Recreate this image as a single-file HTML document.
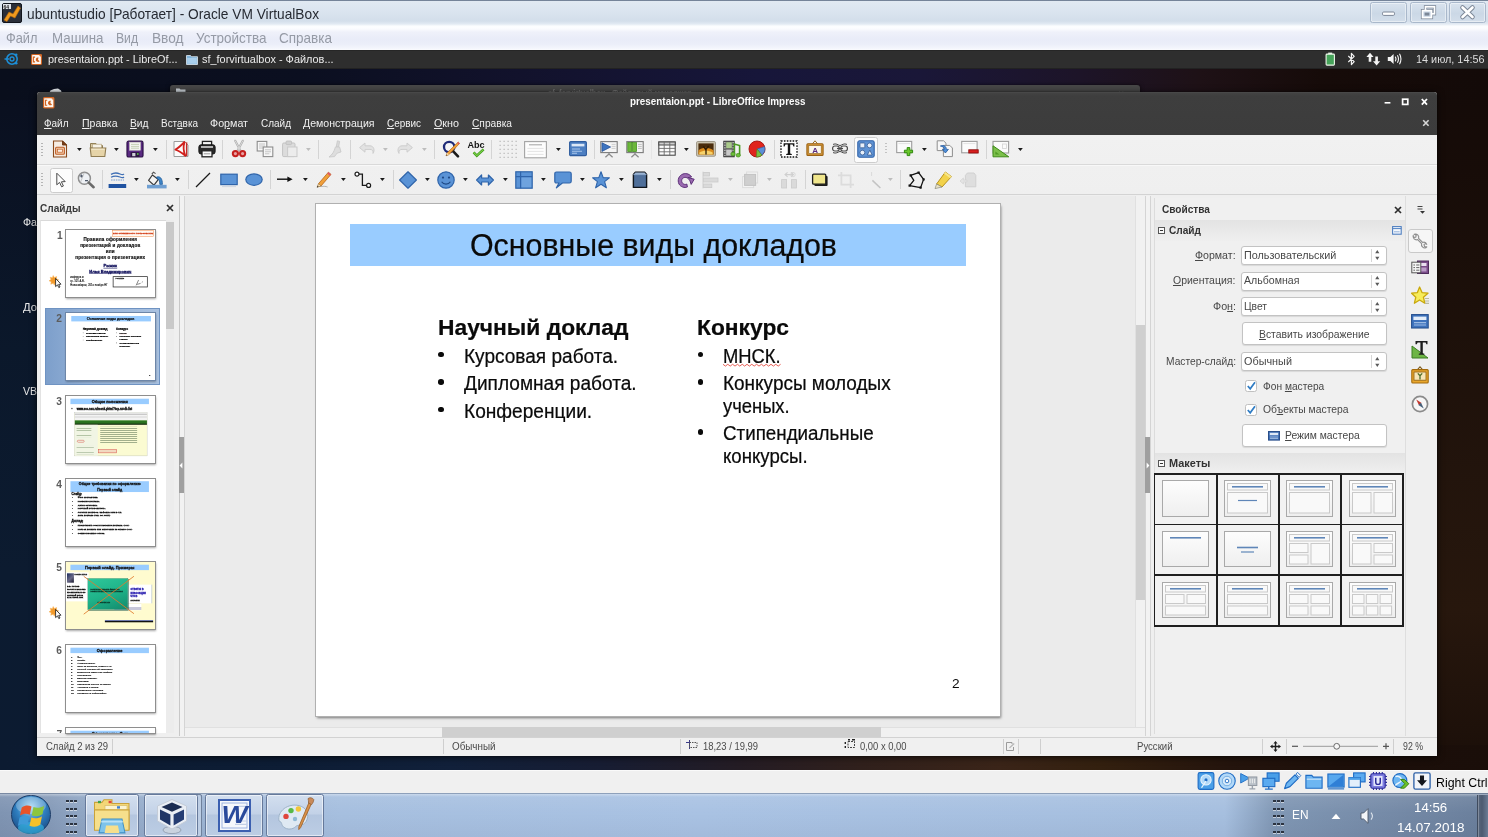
<!DOCTYPE html>
<html lang="ru"><head><meta charset="utf-8"><title>ubuntustudio - Oracle VM VirtualBox</title>
<style>
html,body{margin:0;padding:0}
body{width:1488px;height:837px;overflow:hidden;position:relative;background:#0d1626;font-family:"Liberation Sans",sans-serif}
.t{position:absolute;white-space:pre;transform-origin:0 50%;display:block}
.t u{text-decoration:underline;text-underline-offset:1px}
svg{overflow:visible;display:block}
div{box-sizing:border-box}
.root{position:absolute;left:0;top:0;width:1488px;height:837px;will-change:transform}
.th,.th *{-webkit-text-stroke:1.1px}
.sl{-webkit-text-stroke:.22px}
.th2 .t{-webkit-text-stroke:1.9px}
</style></head>
<body>
<div class="root">
<div style="position:absolute;left:0px;top:0px;width:1488px;height:27px;background:linear-gradient(#6d7c92 0,#7d8ba0 1px,#e1e9f2 1.5px,#dae4ef 12px,#d3deea 21px,#e2eaf3 24px,#fafcfe 26px,#fdfeff 27px);"></div>
<svg style="position:absolute;left:2px;top:3px;" width="20" height="20" viewBox="0 0 20 20"><rect x="0.5" y="0.5" width="19" height="19" rx="1.5" fill="#2a2f3a" stroke="#11151c"/><path d="M2 17 L7 9 L11 11 L16 3 L18.5 5 L13 15 L8.5 13 L5 18.5Z" fill="#f09a1f" stroke="#b86a08" stroke-width=".6"/><rect x="1" y="1" width="8" height="5" fill="#dfe3ea"/><text x="1.5" y="5.5" font-size="5" font-family="Liberation Sans,sans-serif" font-weight="700" fill="#222">64</text></svg>
<span class="t" style="left:26.50px;top:5.82px;font-size:15px;line-height:16.75px;color:#262a32;transform:scaleX(0.9152);">ubuntustudio [Работает] - Oracle VM VirtualBox</span>
<div style="position:absolute;left:1370px;top:2px;width:37px;height:20.5px;box-sizing:border-box;border:1px solid #a9b8cb;border-radius:2.5px;background:linear-gradient(#d9e3ee,#cbd8e6 55%,#d3deea);box-shadow:inset 0 0 0 1px rgba(255,255,255,.45);"></div>
<div style="position:absolute;left:1409.5px;top:2px;width:37px;height:20.5px;box-sizing:border-box;border:1px solid #a9b8cb;border-radius:2.5px;background:linear-gradient(#d9e3ee,#cbd8e6 55%,#d3deea);box-shadow:inset 0 0 0 1px rgba(255,255,255,.45);"></div>
<div style="position:absolute;left:1449px;top:2px;width:37px;height:20.5px;box-sizing:border-box;border:1px solid #a9b8cb;border-radius:2.5px;background:linear-gradient(#d9e3ee,#cbd8e6 55%,#d3deea);box-shadow:inset 0 0 0 1px rgba(255,255,255,.45);"></div>
<svg style="position:absolute;left:1370px;top:2px;" width="37" height="21" viewBox="0 0 37 21"><rect x="12.5" y="10" width="12" height="3.4" rx="1.2" fill="#fff" stroke="#7c8797" stroke-width="1"/></svg>
<svg style="position:absolute;left:1409.5px;top:2px;" width="37" height="21" viewBox="0 0 37 21"><g fill="none" stroke="#7c8797" stroke-width="3.2"><rect x="15.5" y="4.8" width="9" height="7"/><rect x="12.5" y="8.6" width="9" height="7" /></g><g fill="none" stroke="#fff" stroke-width="1.7"><rect x="15.5" y="4.8" width="9" height="7"/></g><rect x="12.5" y="8.6" width="9" height="7" fill="#ccd8e6" stroke="#fff" stroke-width="1.7"/><rect x="14.6" y="10.6" width="4.8" height="3" fill="#7c8797"/></svg>
<svg style="position:absolute;left:1449px;top:2px;" width="37" height="21" viewBox="0 0 37 21"><g stroke-linecap="round"><path d="M13.5 5.5 L23.5 15 M23.5 5.5 L13.5 15" stroke="#7c8797" stroke-width="4.6"/><path d="M13.5 5.5 L23.5 15 M23.5 5.5 L13.5 15" stroke="#fff" stroke-width="2.6"/></g></svg>
<div style="position:absolute;left:0px;top:27px;width:1488px;height:22.5px;background:linear-gradient(#fdfeff 0,#fafbfe 2px,#eff1fa 5px,#e9ecf8 12px,#ebeef9 17px,#f3f5fc 21px,#f8f9fd 22.5px);"></div>
<span class="t" style="left:6.00px;top:29.88px;font-size:14.5px;line-height:16.20px;color:#959aa5;transform:scaleX(0.8836);">Файл</span>
<span class="t" style="left:51.50px;top:29.88px;font-size:14.5px;line-height:16.20px;color:#959aa5;transform:scaleX(0.9178);">Машина</span>
<span class="t" style="left:116.00px;top:29.88px;font-size:14.5px;line-height:16.20px;color:#959aa5;transform:scaleX(0.8387);">Вид</span>
<span class="t" style="left:151.50px;top:29.88px;font-size:14.5px;line-height:16.20px;color:#959aa5;transform:scaleX(0.9426);">Ввод</span>
<span class="t" style="left:195.50px;top:29.88px;font-size:14.5px;line-height:16.20px;color:#959aa5;transform:scaleX(0.9294);">Устройства</span>
<span class="t" style="left:278.50px;top:29.88px;font-size:14.5px;line-height:16.20px;color:#959aa5;transform:scaleX(0.9318);">Справка</span>
<div style="position:absolute;left:0px;top:769.5px;width:1488px;height:24px;background:#f0f0f0;border-top:1px solid #fafafa;box-sizing:border-box;"></div>
<span class="t" style="left:1435.50px;top:775.18px;font-size:13.5px;line-height:15.08px;color:#000;transform:scaleX(0.9154);">Right Ctrl</span>
<div style="position:absolute;left:0px;top:793px;width:1488px;height:44px;background:linear-gradient(90deg,#7f94b2 0,#859ab8 50px,#8fa5c3 80px,#9db4d3 200px,#a6bfdf 340px,#a9c2e3 700px,#a6bfdf 1225px,#8097b4 1275px,#7489a6 1400px,#6b809d 1476px);"></div>
<div style="position:absolute;left:0px;top:793px;width:1488px;height:44px;background:linear-gradient(rgba(70,85,110,.55) 0,rgba(255,255,255,.35) 1.5px,rgba(255,255,255,.08) 4px,rgba(255,255,255,0) 20px,rgba(0,0,30,.04) 44px);"></div>
<div style="position:absolute;left:0px;top:49.5px;width:1488px;height:720px;background:linear-gradient(90deg,#0b1a2f 0,#0c192e 250px,#11122b 520px,#18132e 760px,#22141f 900px,#2e1b15 1020px,#26150e 1150px,#1c0f0a 1300px,#1b0e09 1488px);"></div>
<div style="position:absolute;left:0px;top:49.5px;width:40px;height:720px;background:linear-gradient(#090e1c 0,#0a1020 60px,#0b182b 300px,#0c1b30 520px,#0c1b31 720px);"></div>
<div style="position:absolute;left:1430px;top:49.5px;width:58px;height:720px;background:linear-gradient(#130a08 0,#170c08 120px,#22140c 420px,#27170d 560px,#1e110a 680px,#1a0e09 720px);"></div>
<div style="position:absolute;left:0px;top:49.5px;width:1488px;height:50px;background:linear-gradient(90deg,#090e1c 0,#0b0f20 300px,#12122c 520px,#17163a 760px,#1a1738 920px,#1d1428 1080px,#1e1116 1200px,#160b09 1320px,#130a08 1488px);"></div>
<div style="position:absolute;left:0px;top:745px;width:1488px;height:24.5px;background:linear-gradient(90deg,#0c1b31 0,#0d1d35 300px,#11203a 450px,#171d33 600px,#241c24 740px,#30201c 860px,#3a2418 1000px,#33200f 1100px,#24140d 1230px,#1c0f0a 1340px,#1a0e09 1488px);"></div>
<span class="t" style="left:23.00px;top:216.95px;font-size:10px;line-height:11.17px;color:#e8e8e8;transform:scaleX(1.0635);">Фа</span>
<span class="t" style="left:23.00px;top:301.95px;font-size:10px;line-height:11.17px;color:#e8e8e8;transform:scaleX(1.1248);">До</span>
<span class="t" style="left:23.00px;top:385.95px;font-size:10px;line-height:11.17px;color:#e8e8e8;transform:scaleX(1.0494);">VB</span>
<svg style="position:absolute;left:48px;top:87.5px;" width="15" height="6" viewBox="0 0 15 6"><path d="M1 5.5 L2.4 2.6 L6 1 L10 0.6 L13 2.4 L14 5.5Z" fill="#e9edf2"/></svg>
<div style="position:absolute;left:0px;top:49.5px;width:1488px;height:19.2px;background:#2e2e2e;border-top:1px solid #262626;border-bottom:1px solid #222;"></div>
<svg style="position:absolute;left:4px;top:52px;" width="14" height="14" viewBox="0 0 14 14"><circle cx="8" cy="7" r="5.2" fill="none" stroke="#1d8fd8" stroke-width="1.6"/><circle cx="8" cy="7" r="2" fill="none" stroke="#1d8fd8" stroke-width="1.3"/><path d="M0.5 7 H5" stroke="#1d8fd8" stroke-width="1.5"/><circle cx="12.2" cy="2.8" r="1.3" fill="#1d8fd8"/><circle cx="12.2" cy="11.2" r="1.3" fill="#1d8fd8"/></svg>
<svg style="position:absolute;left:30.5px;top:53.5px;" width="11" height="11" viewBox="0 0 12 12"><rect x="0.6" y="0.6" width="10.8" height="10.8" rx="1" fill="#fdf6ef" stroke="#d0621f" stroke-width="1.2"/><path d="M8.8 1.2 H10.8 V3.4Z" fill="#d0621f"/><path d="M4.4 3.4 H2.6 V8.6 H4.4" fill="none" stroke="#d0621f" stroke-width="1.2"/><path d="M8.2 3.9a2.4 2.4 0 1 0 1.2 3.9L7.6 6.2Z" fill="#d0621f"/></svg>
<span class="t" style="left:47.50px;top:54.00px;font-size:10.5px;line-height:11.73px;color:#ececec;transform:scaleX(1.0368);">presentaion.ppt - LibreOf...</span>
<svg style="position:absolute;left:185.5px;top:53.5px;" width="12" height="11" viewBox="0 0 12 11"><path d="M0.5 1.5h4l1 1.2h6v7.8h-11z" fill="#7fb2d9" stroke="#dfeaf3" stroke-width=".8"/><rect x="1.2" y="4" width="9.6" height="5.8" fill="#a9cfec"/></svg>
<span class="t" style="left:202.00px;top:54.00px;font-size:10.5px;line-height:11.73px;color:#ececec;transform:scaleX(1.0384);">sf_forvirtualbox - Файлов...</span>
<svg style="position:absolute;left:1325px;top:52px;" width="11" height="14" viewBox="0 0 11 14"><rect x="3.2" y="0.6" width="4" height="2" fill="#e9f3e6"/><rect x="1.1" y="2.1" width="8.3" height="11" rx=".8" fill="#46a35a" stroke="#eef7ea" stroke-width="1.1"/></svg>
<svg style="position:absolute;left:1346px;top:52px;" width="11" height="14" viewBox="0 0 11 14"><path d="M2.3 4 L8.2 9.6 L5.4 12.6 V1.4 L8.2 4.4 L2.3 10" fill="none" stroke="#f2f2f2" stroke-width="1.2" stroke-linejoin="round"/></svg>
<svg style="position:absolute;left:1366px;top:52px;" width="15" height="14" viewBox="0 0 15 14"><path d="M4 0.8 L7.6 5 H5.3 V9.8 H2.7 V5 H0.4Z" fill="#f4f4f4"/><path d="M10.6 13.4 L14.2 9.2 H11.9 V4.4 H9.3 V9.2 H7Z" fill="#f4f4f4"/></svg>
<svg style="position:absolute;left:1387px;top:52px;" width="16" height="14" viewBox="0 0 16 14"><path d="M0.8 5 H3.4 L6.6 2 V12 L3.4 9 H0.8Z" fill="#f4f4f4"/><path d="M8.3 4.6 Q9.8 7 8.3 9.4 M10.4 3.2 Q12.6 7 10.4 10.8 M12.5 1.8 Q15.4 7 12.5 12.2" fill="none" stroke="#f4f4f4" stroke-width="1.1"/></svg>
<span class="t" style="left:1416.00px;top:53.65px;font-size:10px;line-height:11.17px;color:#dedede;transform:scaleX(1.0841);">14 июл, 14:56</span>
<div style="position:absolute;left:170px;top:85px;width:970px;height:20px;background:#474747;border-radius:3px 3px 0 0;box-shadow:0 0 4px rgba(0,0,0,.6);"></div>
<svg style="position:absolute;left:176px;top:87px;" width="10" height="8" viewBox="0 0 10 8"><path d="M0 1.5h3.5l1 1h5v5.5h-9.5z" fill="#cfd6dc"/></svg>
<span class="t" style="left:548.00px;top:88.00px;font-size:9.5px;line-height:10.61px;color:#6f6f6f;font-weight:700;transform:scaleX(0.7970);">sf_forvirtualbox - Файловый менеджер</span>
<span class="t" style="left:1108.00px;top:88.90px;font-size:9.5px;line-height:10.61px;color:#7a7a7a;font-weight:700;">–  ×</span>
<div style="position:absolute;left:36.5px;top:92px;width:1400px;height:664px;background:#efefef;border-radius:3px 3px 0 0;box-shadow:0 1px 7px rgba(0,0,0,.75),0 0 1px #000;"></div>
<div style="position:absolute;left:36.5px;top:92px;width:1400px;height:42.5px;background:linear-gradient(#434343 0,#3e3e3e 3px,#3c3c3c 100%);border-radius:3px 3px 0 0;border-top:1px solid #484848;"></div>
<svg style="position:absolute;left:42.5px;top:96.5px;" width="11.5" height="11.5" viewBox="0 0 12 12"><rect x="0.6" y="0.6" width="10.8" height="10.8" rx="1" fill="#fdf6ef" stroke="#d0621f" stroke-width="1.2"/><path d="M8.8 1.2 H10.8 V3.4Z" fill="#d0621f"/><path d="M4.4 3.4 H2.6 V8.6 H4.4" fill="none" stroke="#d0621f" stroke-width="1.2"/><path d="M8.2 3.9a2.4 2.4 0 1 0 1.2 3.9L7.6 6.2Z" fill="#d0621f"/></svg>
<span class="t" style="left:630.00px;top:96.38px;font-size:10.3px;line-height:11.51px;color:#fafafa;font-weight:700;transform:scaleX(0.9582);">presentaion.ppt - LibreOffice Impress</span>
<svg style="position:absolute;left:1380px;top:96px;" width="54" height="12" viewBox="0 0 54 12"><path d="M4.6 6.8 H10.4" stroke="#fff" stroke-width="1.6"/><rect x="22.6" y="3.2" width="5.2" height="5.2" fill="none" stroke="#fff" stroke-width="1.7"/><path d="M41.8 3 L47 8.6 M47 3 L41.8 8.6" stroke="#fff" stroke-width="1.8"/></svg>
<svg style="position:absolute;left:1422px;top:119px;" width="8" height="8" viewBox="0 0 8 8"><path d="M1.2 1.2 L6.6 6.8 M6.6 1.2 L1.2 6.8" stroke="#d8d8d8" stroke-width="1.6"/></svg>
<span class="t" style="left:43.50px;top:117.50px;font-size:10.5px;line-height:11.73px;color:#f0f0f0;transform:scaleX(0.9491);"><u>Ф</u>айл</span>
<span class="t" style="left:81.50px;top:117.50px;font-size:10.5px;line-height:11.73px;color:#f0f0f0;transform:scaleX(1.0009);"><u>П</u>равка</span>
<span class="t" style="left:129.50px;top:117.50px;font-size:10.5px;line-height:11.73px;color:#f0f0f0;transform:scaleX(0.9739);"><u>В</u>ид</span>
<span class="t" style="left:160.50px;top:117.50px;font-size:10.5px;line-height:11.73px;color:#f0f0f0;transform:scaleX(0.9481);">Вст<u>а</u>вка</span>
<span class="t" style="left:210.00px;top:117.50px;font-size:10.5px;line-height:11.73px;color:#f0f0f0;transform:scaleX(1.0188);">Фо<u>р</u>мат</span>
<span class="t" style="left:260.50px;top:117.50px;font-size:10.5px;line-height:11.73px;color:#f0f0f0;transform:scaleX(0.9511);">Слайд</span>
<span class="t" style="left:303.00px;top:117.50px;font-size:10.5px;line-height:11.73px;color:#f0f0f0;transform:scaleX(1.0055);"><u>Д</u>емонстрация</span>
<span class="t" style="left:387.00px;top:117.50px;font-size:10.5px;line-height:11.73px;color:#f0f0f0;transform:scaleX(0.9456);"><u>С</u>ервис</span>
<span class="t" style="left:433.50px;top:117.50px;font-size:10.5px;line-height:11.73px;color:#f0f0f0;transform:scaleX(1.0246);"><u>О</u>кно</span>
<span class="t" style="left:471.50px;top:117.50px;font-size:10.5px;line-height:11.73px;color:#f0f0f0;transform:scaleX(0.9711);"><u>С</u>правка</span>
<div style="position:absolute;left:36.5px;top:134.5px;width:1400px;height:60.6px;background:linear-gradient(#f1f1f1,#efefef);border-bottom:1px solid #d3d3d3;"></div>
<div style="position:absolute;left:41px;top:143px;width:2px;height:13px;background:repeating-linear-gradient(#b5b5b5 0,#b5b5b5 1px,transparent 1px,transparent 3px);"></div>
<div style="position:absolute;left:41px;top:173px;width:2px;height:13px;background:repeating-linear-gradient(#b5b5b5 0,#b5b5b5 1px,transparent 1px,transparent 3px);"></div>
<div style="position:absolute;left:36.5px;top:196px;width:143.5px;height:540px;background:#efefef;border-right:1px solid #c8c8c8;"></div>
<span class="t" style="left:40.00px;top:202.55px;font-size:10px;line-height:11.17px;color:#3a3a3a;font-weight:700;transform:scaleX(1.0082);">Слайды</span>
<svg style="position:absolute;left:165.5px;top:203.5px;" width="8" height="8" viewBox="0 0 8 8"><path d="M1 1 L7 7 M7 1 L1 7" stroke="#2e2e2e" stroke-width="1.7"/></svg>
<div style="position:absolute;left:39.5px;top:219.5px;width:134.5px;height:513.2px;background:#fff;border-top:1px solid #d9d9d9;border-left:1px solid #e3e3e3;"></div>
<div style="position:absolute;left:165.5px;top:219.5px;width:8.5px;height:513.2px;background:#ececec;"></div>
<div style="position:absolute;left:165.5px;top:221.5px;width:8.5px;height:107px;background:#c9c9c9;"></div>
<div style="position:absolute;left:180px;top:196px;width:4.5px;height:540px;background:#f2f2f2;border-right:1px solid #d4d4d4;"></div>
<div style="position:absolute;left:178.5px;top:437px;width:5px;height:56px;background:#9f9f9f;"></div>
<svg style="position:absolute;left:179px;top:462px;" width="4" height="7" viewBox="0 0 4 7"><path d="M3.4 0.6 L0.6 3.5 L3.4 6.4Z" fill="#fff"/></svg>
<div style="position:absolute;left:185px;top:196px;width:950px;height:531px;background:#ebebeb;"></div>
<div style="position:absolute;left:316.4px;top:204.2px;width:683.2px;height:511.8px;background:#fff;box-shadow:0 0 0 1px #b0b0b0,1px 1.6px 2.5px rgba(0,0,0,.5);"></div>
<div style="position:absolute;left:1135px;top:196px;width:9.5px;height:531px;background:#f1f1f1;border-left:1px solid #e0e0e0;"></div>
<div style="position:absolute;left:1135.5px;top:325px;width:9px;height:275px;background:#cfcfcf;"></div>
<div style="position:absolute;left:185px;top:726.5px;width:959.5px;height:10px;background:#f1f1f1;border-top:1px solid #e0e0e0;"></div>
<div style="position:absolute;left:442px;top:727px;width:439px;height:9.5px;background:#cfcfcf;"></div>
<div style="position:absolute;left:1144.5px;top:196px;width:6px;height:540px;background:#f2f2f2;border-left:1px solid #d4d4d4;border-right:1px solid #d4d4d4;"></div>
<div style="position:absolute;left:1144.5px;top:437px;width:5px;height:56px;background:#9f9f9f;"></div>
<svg style="position:absolute;left:1145.5px;top:462px;" width="4" height="7" viewBox="0 0 4 7"><path d="M0.6 0.6 L3.4 3.5 L0.6 6.4Z" fill="#fff"/></svg>
<div style="position:absolute;left:36.5px;top:736.5px;width:1400px;height:19.5px;background:#f0f0f0;border-top:1px solid #d2d2d2;"></div>
<div style="position:absolute;left:112px;top:739px;width:1px;height:15px;background:#cfcfcf;"></div>
<div style="position:absolute;left:443px;top:739px;width:1px;height:15px;background:#cfcfcf;"></div>
<div style="position:absolute;left:680px;top:739px;width:1px;height:15px;background:#cfcfcf;"></div>
<div style="position:absolute;left:1003px;top:739px;width:1px;height:15px;background:#cfcfcf;"></div>
<div style="position:absolute;left:1018px;top:739px;width:1px;height:15px;background:#cfcfcf;"></div>
<div style="position:absolute;left:1040px;top:739px;width:1px;height:15px;background:#cfcfcf;"></div>
<div style="position:absolute;left:1262px;top:739px;width:1px;height:15px;background:#cfcfcf;"></div>
<div style="position:absolute;left:1286px;top:739px;width:1px;height:15px;background:#cfcfcf;"></div>
<div style="position:absolute;left:1393px;top:739px;width:1px;height:15px;background:#cfcfcf;"></div>
<span class="t" style="left:46.00px;top:741.45px;font-size:10px;line-height:11.17px;color:#4a4a4a;transform:scaleX(0.9505);">Слайд 2 из 29</span>
<span class="t" style="left:452.00px;top:741.45px;font-size:10px;line-height:11.17px;color:#4a4a4a;transform:scaleX(0.9842);">Обычный</span>
<span class="t" style="left:702.50px;top:741.45px;font-size:10px;line-height:11.17px;color:#4a4a4a;transform:scaleX(0.9420);">18,23 / 19,99</span>
<span class="t" style="left:860.00px;top:741.45px;font-size:10px;line-height:11.17px;color:#4a4a4a;transform:scaleX(0.9397);">0,00 x 0,00</span>
<span class="t" style="left:1136.50px;top:741.45px;font-size:10px;line-height:11.17px;color:#4a4a4a;transform:scaleX(0.9568);">Русский</span>
<span class="t" style="left:1402.50px;top:741.45px;font-size:10px;line-height:11.17px;color:#4a4a4a;transform:scaleX(0.8775);">92 %</span>
<svg style="position:absolute;left:686px;top:740px;" width="12" height="10" viewBox="0 0 12 10"><path d="M3.5 0 V9 M0 2.5 H4" stroke="#3b3b8a" stroke-width="1"/><rect x="3.5" y="2.5" width="7.5" height="5" fill="none" stroke="#555" stroke-width="1" stroke-dasharray="1.5 1"/></svg>
<svg style="position:absolute;left:844px;top:739px;" width="12" height="11" viewBox="0 0 12 11"><rect x="4" y="2.5" width="6.5" height="6" fill="none" stroke="#444" stroke-width="1" stroke-dasharray="2 1"/><path d="M1.3 3 V5 M1.3 7 V9 M4 0.8 H6 M8 0.8 H11" stroke="#222" stroke-width="1.4"/></svg>
<svg style="position:absolute;left:1004.5px;top:740.5px;" width="11" height="11" viewBox="0 0 11 11"><path d="M1.5 1.5 H7 V3 M1.5 1.5 V9.5 H8.5 V6" fill="none" stroke="#9a9a9a" stroke-width="1"/><path d="M4 6.5 L8.8 2 L9.6 3 L5 7.3Z" fill="#b5b5b5"/></svg>
<svg style="position:absolute;left:1269.5px;top:740.5px;" width="11" height="11" viewBox="0 0 11 11"><path d="M5.5 0 L7.6 2.6 H6.2 V4.8 H8.4 V3.4 L11 5.5 L8.4 7.6 V6.2 H6.2 V8.4 H7.6 L5.5 11 L3.4 8.4 H4.8 V6.2 H2.6 V7.6 L0 5.5 L2.6 3.4 V4.8 H4.8 V2.6 H3.4Z" fill="#1e1e1e"/></svg>
<svg style="position:absolute;left:1289px;top:740px;" width="102" height="12" viewBox="0 0 102 12"><path d="M3 6.3 H9" stroke="#555" stroke-width="1.2"/><path d="M14 6.3 H89" stroke="#9a9a9a" stroke-width="1"/><circle cx="47.7" cy="6.3" r="2.9" fill="#f6f6f6" stroke="#6a6a6a" stroke-width="1"/><path d="M94 6.3 H100 M97 3.3 V9.3" stroke="#555" stroke-width="1.2"/></svg>
<div style="position:absolute;left:350px;top:223.5px;width:615.5px;height:42px;background:#99ccff;"></div>
<span class="t sl" style="left:470.00px;top:228.84px;font-size:31px;line-height:34.63px;color:#0a0a0a;transform:scaleX(0.9791);">Основные виды докладов</span>
<span class="t sl" style="left:438.00px;top:315.07px;font-size:22.8px;line-height:25.47px;color:#0a0a0a;font-weight:700;transform:scaleX(1.0006);">Научный доклад</span>
<span class="t sl" style="left:697.00px;top:315.07px;font-size:22.8px;line-height:25.47px;color:#0a0a0a;font-weight:700;transform:scaleX(0.9998);">Конкурс</span>
<span class="t sl" style="left:463.80px;top:345.96px;font-size:19.6px;line-height:21.89px;color:#0a0a0a;transform:scaleX(0.9724);">Курсовая работа.</span>
<div style="position:absolute;left:438.4px;top:351.9px;width:5.6px;height:5.6px;background:#0a0a0a;border-radius:50%;"></div>
<span class="t sl" style="left:463.80px;top:373.36px;font-size:19.6px;line-height:21.89px;color:#0a0a0a;transform:scaleX(0.9743);">Дипломная работа.</span>
<div style="position:absolute;left:438.4px;top:379.3px;width:5.6px;height:5.6px;background:#0a0a0a;border-radius:50%;"></div>
<span class="t sl" style="left:463.80px;top:400.76px;font-size:19.6px;line-height:21.89px;color:#0a0a0a;transform:scaleX(0.9759);">Конференции.</span>
<div style="position:absolute;left:438.4px;top:406.7px;width:5.6px;height:5.6px;background:#0a0a0a;border-radius:50%;"></div>
<span class="t sl" style="left:723.30px;top:345.76px;font-size:19.6px;line-height:21.89px;color:#0a0a0a;transform:scaleX(0.9382);">МНСК.</span>
<div style="position:absolute;left:697.5px;top:351.7px;width:5.6px;height:5.6px;background:#0a0a0a;border-radius:50%;"></div>
<span class="t sl" style="left:723.30px;top:373.06px;font-size:19.6px;line-height:21.89px;color:#0a0a0a;transform:scaleX(0.9685);">Конкурсы молодых</span>
<div style="position:absolute;left:697.5px;top:379.0px;width:5.6px;height:5.6px;background:#0a0a0a;border-radius:50%;"></div>
<span class="t sl" style="left:723.30px;top:395.66px;font-size:19.6px;line-height:21.89px;color:#0a0a0a;transform:scaleX(0.9385);">ученых.</span>
<span class="t sl" style="left:723.30px;top:423.26px;font-size:19.6px;line-height:21.89px;color:#0a0a0a;transform:scaleX(0.9588);">Стипендиальные</span>
<div style="position:absolute;left:697.5px;top:429.2px;width:5.6px;height:5.6px;background:#0a0a0a;border-radius:50%;"></div>
<span class="t sl" style="left:723.30px;top:445.86px;font-size:19.6px;line-height:21.89px;color:#0a0a0a;transform:scaleX(0.9503);">конкурсы.</span>
<svg style="position:absolute;left:0px;top:0px;" width="1" height="1" viewBox="0 0 1 1"><polyline points="723.0,364.3 725.4,366.1 727.8,364.3 730.2,366.1 732.6,364.3 735.0,366.1 737.4,364.3 739.8,366.1 742.2,364.3 744.6,366.1 747.0,364.3 749.4,366.1 751.8,364.3 754.2,366.1 756.6,364.3 759.0,366.1 761.4,364.3 763.8,366.1 766.2,364.3 768.6,366.1 771.0,364.3 773.4,366.1 775.8,364.3 778.2,366.1 780.6,364.3" fill="none" stroke="#e23a2e" stroke-width=".8"/></svg>
<span class="t" style="left:952.00px;top:675.69px;font-size:13.6px;line-height:15.19px;color:#0a0a0a;transform:scaleX(1.0048);">2</span>
<div style="position:absolute;left:44.6px;top:308.3px;width:115.6px;height:76.7px;background:linear-gradient(90deg,#7d9fcb,#9ab6da 45%,#a9c1e0);border:1px solid #6f93c2;"></div>
<div style="position:absolute;left:66.3px;top:230.1px;width:88.6px;height:66.6px;overflow:hidden;background:#fff;box-shadow:0 0 0 1px #8e8e8e,0.5px 1.5px 2px 0.5px rgba(0,0,0,.35);"><div class="th" style="position:absolute;left:0;top:0;width:360px;height:276px;transform:scale(.2461);transform-origin:0 0;"><div style="position:absolute;left:188px;top:2px;width:168px;height:25px;border:2px solid #ee8a4a;background:#fffaf4;color:#d4401c;font-size:9.5px;line-height:21px;text-align:center;font-weight:700;white-space:nowrap;overflow:hidden;">ДЛЯ СЛУЖЕБНОГО ПОЛЬЗОВАНИЯ</div><div style="position:absolute;left:0;top:25px;width:360px;text-align:center;font-size:18.5px;line-height:24.6px;font-weight:700;color:#111;letter-spacing:.8px;-webkit-text-stroke:.75px;">Правила оформления<br>презентаций и докладов<br>или<br>презентация о презентациях</div><div style="position:absolute;left:0;top:136px;width:360px;text-align:center;font-size:16.5px;line-height:21.4px;font-weight:700;color:#0c0c58;"><span style="border-bottom:2.6px solid #0c0c58;line-height:15px;display:inline-block">Рыжик</span><br><span style="border-bottom:2.6px solid #0c0c58;line-height:15px;display:inline-block">Илья Владимирович</span></div><div style="-webkit-text-stroke:.4px"><span class="t"  style="left:17px;top:186.0px;font-size:11px;line-height:15.6px;color:#111;font-weight:400;-webkit-text-stroke:.4px;">кафедра и</span><span class="t"  style="left:17px;top:201.6px;font-size:11px;line-height:15.6px;color:#111;font-weight:400;-webkit-text-stroke:.4px;">гр. 101 А.В.</span><span class="t"  style="left:17px;top:217.2px;font-size:11px;line-height:15.6px;color:#111;font-weight:400;-webkit-text-stroke:.4px;">Новосибирск, 201х ноябрь НГ</span></div><div style="position:absolute;left:190px;top:188px;width:142px;height:45px;border:3px solid #2a2a2a;background:#fff;font-size:8px;color:#333;padding:2px 8px;">Разрядка<svg style="position:absolute;left:90px;top:8px" width="40" height="28"><path d="M2 26 L12 4 M6 22 L20 18 M25 14 l4 -3" stroke="#222" stroke-width="2.2" fill="none"/></svg></div></div></div>
<span class="t" style="left:57.00px;top:229.67px;font-size:10.2px;line-height:11.39px;color:#5c5c5c;font-weight:700;">1</span>
<svg style="position:absolute;left:47.5px;top:274.5px;" width="14" height="13" viewBox="0 0 14 13"><path d="M5.2 0.6 L6.4 2.6 L8.6 1.6 L8.4 4 L10.6 4.8 L8.8 6.2 L9.8 8.4 L7.4 8 L6.4 10.2 L5.2 8.2 L2.8 9.2 L3.2 6.8 L1 5.8 L3 4.6 L2.2 2.2 L4.4 2.8Z" fill="#f39a2b" stroke="#f6b867" stroke-width=".6"/><path d="M7.6 3.4 V11.6 L9.5 9.9 L10.8 12.6 L12 12 L10.7 9.4 L13 9.2Z" fill="#fff" stroke="#111" stroke-width=".8" stroke-linejoin="round"/></svg>
<div style="position:absolute;left:66.3px;top:313.3px;width:88.6px;height:66.6px;overflow:hidden;background:#fff;box-shadow:0 0 0 1px #6d86a8,0.5px 1.5px 2px 0.5px rgba(0,0,0,.3);"><div class="th2" style="position:absolute;left:-40.80773722627737px;top:-26.32131386861314px;width:1488px;height:837px;transform:scale(0.12934);transform-origin:0 0;"><div style="position:absolute;left:350px;top:223.5px;width:615.5px;height:42px;background:#99ccff;"></div>
<span class="t sl" style="left:470.00px;top:228.84px;font-size:31px;line-height:34.63px;color:#0a0a0a;transform:scaleX(0.9791);">Основные виды докладов</span>
<span class="t sl" style="left:438.00px;top:315.07px;font-size:22.8px;line-height:25.47px;color:#0a0a0a;font-weight:700;transform:scaleX(1.0006);">Научный доклад</span>
<span class="t sl" style="left:697.00px;top:315.07px;font-size:22.8px;line-height:25.47px;color:#0a0a0a;font-weight:700;transform:scaleX(0.9998);">Конкурс</span>
<span class="t sl" style="left:463.80px;top:345.96px;font-size:19.6px;line-height:21.89px;color:#0a0a0a;transform:scaleX(0.9724);">Курсовая работа.</span>
<div style="position:absolute;left:438.4px;top:351.9px;width:5.6px;height:5.6px;background:#0a0a0a;border-radius:50%;"></div>
<span class="t sl" style="left:463.80px;top:373.36px;font-size:19.6px;line-height:21.89px;color:#0a0a0a;transform:scaleX(0.9743);">Дипломная работа.</span>
<div style="position:absolute;left:438.4px;top:379.3px;width:5.6px;height:5.6px;background:#0a0a0a;border-radius:50%;"></div>
<span class="t sl" style="left:463.80px;top:400.76px;font-size:19.6px;line-height:21.89px;color:#0a0a0a;transform:scaleX(0.9759);">Конференции.</span>
<div style="position:absolute;left:438.4px;top:406.7px;width:5.6px;height:5.6px;background:#0a0a0a;border-radius:50%;"></div>
<span class="t sl" style="left:723.30px;top:345.76px;font-size:19.6px;line-height:21.89px;color:#0a0a0a;transform:scaleX(0.9382);">МНСК.</span>
<div style="position:absolute;left:697.5px;top:351.7px;width:5.6px;height:5.6px;background:#0a0a0a;border-radius:50%;"></div>
<span class="t sl" style="left:723.30px;top:373.06px;font-size:19.6px;line-height:21.89px;color:#0a0a0a;transform:scaleX(0.9685);">Конкурсы молодых</span>
<div style="position:absolute;left:697.5px;top:379.0px;width:5.6px;height:5.6px;background:#0a0a0a;border-radius:50%;"></div>
<span class="t sl" style="left:723.30px;top:395.66px;font-size:19.6px;line-height:21.89px;color:#0a0a0a;transform:scaleX(0.9385);">ученых.</span>
<span class="t sl" style="left:723.30px;top:423.26px;font-size:19.6px;line-height:21.89px;color:#0a0a0a;transform:scaleX(0.9588);">Стипендиальные</span>
<div style="position:absolute;left:697.5px;top:429.2px;width:5.6px;height:5.6px;background:#0a0a0a;border-radius:50%;"></div>
<span class="t sl" style="left:723.30px;top:445.86px;font-size:19.6px;line-height:21.89px;color:#0a0a0a;transform:scaleX(0.9503);">конкурсы.</span>
<svg style="position:absolute;left:0px;top:0px;" width="1" height="1" viewBox="0 0 1 1"><polyline points="723.0,364.3 725.4,366.1 727.8,364.3 730.2,366.1 732.6,364.3 735.0,366.1 737.4,364.3 739.8,366.1 742.2,364.3 744.6,366.1 747.0,364.3 749.4,366.1 751.8,364.3 754.2,366.1 756.6,364.3 759.0,366.1 761.4,364.3 763.8,366.1 766.2,364.3 768.6,366.1 771.0,364.3 773.4,366.1 775.8,364.3 778.2,366.1 780.6,364.3" fill="none" stroke="#e23a2e" stroke-width=".8"/></svg>
<span class="t" style="left:952.00px;top:675.69px;font-size:13.6px;line-height:15.19px;color:#0a0a0a;transform:scaleX(1.0048);">2</span></div></div>
<span class="t" style="left:56.30px;top:312.87px;font-size:10.2px;line-height:11.39px;color:#5c5c5c;font-weight:700;">2</span>
<div style="position:absolute;left:66.3px;top:396.29999999999995px;width:88.6px;height:66.6px;overflow:hidden;background:#fff;box-shadow:0 0 0 1px #8e8e8e,0.5px 1.5px 2px 0.5px rgba(0,0,0,.35);"><div class="th" style="position:absolute;left:0;top:0;width:360px;height:276px;transform:scale(.2461);transform-origin:0 0;"><div style="position:absolute;left:18px;top:11px;width:319px;height:22px;background:#99ccff;text-align:center;font-size:16px;line-height:22px;color:#111;font-weight:700;">Общие положения</div><span class="t" style="left:22px;top:45px;font-size:11px;line-height:12px;color:#111;">•</span><span class="t" style="left:44px;top:45px;font-size:11px;line-height:12px;color:#111;font-weight:700;">www.ssc.nsu.ru/msnk.phtml?top.ru=db.list</span><div style="position:absolute;left:34px;top:68px;width:296px;height:176px;background:#fbfbd2;border:1.5px solid #9aa0a8;overflow:hidden;"><div style="position:absolute;left:0;top:0;width:100%;height:30px;background:repeating-linear-gradient(#e4e4e4 0,#e4e4e4 6px,#c9c9c9 6px,#c9c9c9 7px,#f3f3f3 7px,#f3f3f3 14px);"></div><div style="position:absolute;left:0;top:30px;width:100%;height:18px;background:linear-gradient(#2a7a20 0,#2a6d1e 60%,#0d1a0a 100%);"></div><div style="position:absolute;left:0;top:48px;width:94px;height:130px;background:#f1f5e4;"></div><div style="position:absolute;left:8px;top:58px;width:60px;height:40px;background:repeating-linear-gradient(transparent 0,transparent 5px,#b4c4a6 5px,#b4c4a6 7px);"></div><div style="position:absolute;left:10px;top:110px;width:30px;height:10px;border:2px solid #d9534a;border-radius:5px;"></div><div style="position:absolute;left:8px;top:134px;width:70px;height:34px;background:repeating-linear-gradient(transparent 0,transparent 5px,#bccab0 5px,#bccab0 7px);"></div><div style="position:absolute;left:104px;top:56px;width:150px;height:80px;background:repeating-linear-gradient(transparent 0,transparent 6px,#a3b08c 6px,#a3b08c 8px);"></div><div style="position:absolute;left:96px;top:148px;width:76px;height:15px;border:2px solid #d9534a;background:#f2d9c0;"></div></div></div></div>
<span class="t" style="left:56.30px;top:395.87px;font-size:10.2px;line-height:11.39px;color:#5c5c5c;font-weight:700;">3</span>
<div style="position:absolute;left:66.3px;top:479.29999999999995px;width:88.6px;height:66.6px;overflow:hidden;background:#fff;box-shadow:0 0 0 1px #8e8e8e,0.5px 1.5px 2px 0.5px rgba(0,0,0,.35);"><div class="th" style="position:absolute;left:0;top:0;width:360px;height:276px;transform:scale(.2461);transform-origin:0 0;"><div style="position:absolute;left:18px;top:9px;width:319px;height:44px;background:#99ccff;text-align:center;font-size:14px;line-height:22px;color:#111;font-weight:700;">Общие требования по оформлению<br>Первый слайд</div><span class="t" style="left:22px;top:54px;font-size:12px;line-height:13px;font-weight:700;color:#111;">Слайд:</span><span class="t" style="left:24px;top:69.0px;font-size:9.4px;line-height:14.6px;color:#111;">•</span><span class="t" style="left:48px;top:69.0px;font-size:9.4px;line-height:14.6px;color:#111;font-weight:700;">ФИО докладчика.</span><span class="t" style="left:24px;top:83.6px;font-size:9.4px;line-height:14.6px;color:#111;">•</span><span class="t" style="left:48px;top:83.6px;font-size:9.4px;line-height:14.6px;color:#111;font-weight:700;">Название доклада.</span><span class="t" style="left:24px;top:98.2px;font-size:9.4px;line-height:14.6px;color:#111;">•</span><span class="t" style="left:48px;top:98.2px;font-size:9.4px;line-height:14.6px;color:#111;font-weight:700;">Автор заголовка.</span><span class="t" style="left:24px;top:112.8px;font-size:9.4px;line-height:14.6px;color:#111;">•</span><span class="t" style="left:48px;top:112.8px;font-size:9.4px;line-height:14.6px;color:#111;font-weight:700;">Научный руководитель.</span><span class="t" style="left:24px;top:127.4px;font-size:9.4px;line-height:14.6px;color:#111;">•</span><span class="t" style="left:48px;top:127.4px;font-size:9.4px;line-height:14.6px;color:#111;font-weight:700;">Логотип конкурса / кафедры или в т.п.</span><span class="t" style="left:24px;top:142.0px;font-size:9.4px;line-height:14.6px;color:#111;">•</span><span class="t" style="left:48px;top:142.0px;font-size:9.4px;line-height:14.6px;color:#111;font-weight:700;">Дата доклада (год: об. сент.)</span><span class="t" style="left:22px;top:165px;font-size:12px;line-height:13px;font-weight:700;color:#111;">Доклад:</span><span class="t" style="left:24px;top:181px;font-size:9.4px;line-height:15px;color:#111;">•</span><span class="t" style="left:48px;top:181px;font-size:9.4px;line-height:15px;color:#111;font-weight:700;">Представить себя и название доклада. (???)</span><span class="t" style="left:24px;top:196px;font-size:9.4px;line-height:15px;color:#111;">•</span><span class="t" style="left:48px;top:196px;font-size:9.4px;line-height:15px;color:#111;font-weight:700;">Нельзя держать при аннотации на экране (???)</span><span class="t" style="left:24px;top:211px;font-size:9.4px;line-height:15px;color:#111;">•</span><span class="t" style="left:48px;top:211px;font-size:9.4px;line-height:15px;color:#111;font-weight:700;">Общие вводные слова.</span></div></div>
<span class="t" style="left:56.30px;top:478.87px;font-size:10.2px;line-height:11.39px;color:#5c5c5c;font-weight:700;">4</span>
<div style="position:absolute;left:66.3px;top:562.3px;width:88.6px;height:66.6px;overflow:hidden;background:#fffbcf;box-shadow:0 0 0 1px #8e8e8e,0.5px 1.5px 2px 0.5px rgba(0,0,0,.35);"><div class="th" style="position:absolute;left:0;top:0;width:360px;height:276px;transform:scale(.2461);transform-origin:0 0;"><div style="position:absolute;left:18px;top:11px;width:319px;height:22px;background:#99ccff;text-align:center;font-size:16px;line-height:22px;color:#111;font-weight:700;">Первый слайд. Примеры</div><div style="position:absolute;left:0;top:42px;width:92px;height:118px;background:#fff;"></div><div style="position:absolute;left:4px;top:46px;width:28px;height:38px;background:linear-gradient(135deg,#1a2a5a,#6a6a88 55%,#15152a);"></div><span class="t" style="left:34px;top:46px;font-size:6px;line-height:8px;color:#222;">Название доклада</span><span class="t" style="left:4px;top:94.0px;font-size:8.5px;line-height:11.5px;color:#111;font-weight:700;">В.В. Петров</span><span class="t" style="left:4px;top:105.5px;font-size:8.5px;line-height:11.5px;color:#111;font-weight:700;">Расчёт и моделир</span><span class="t" style="left:4px;top:117.0px;font-size:8.5px;line-height:11.5px;color:#111;font-weight:700;">предприятия в не</span><span class="t" style="left:4px;top:128.5px;font-size:8.5px;line-height:11.5px;color:#111;font-weight:700;">Научный руков</span><span class="t" style="left:4px;top:140.0px;font-size:8.5px;line-height:11.5px;color:#111;font-weight:700;">к.т.н. проф. мех</span><div style="position:absolute;left:186px;top:92px;width:164px;height:76px;background:#fff;border-right:2px solid #9aa;"></div><span class="t" style="left:262px;top:100px;font-size:12px;line-height:16px;color:#2a1fb0;font-weight:700;">ответы в</span><span class="t" style="left:262px;top:116px;font-size:12px;line-height:16px;color:#2a1fb0;font-weight:700;">классации</span><span class="t" style="left:262px;top:132px;font-size:12px;line-height:16px;color:#2a1fb0;font-weight:700;">чтов</span><span class="t" style="left:262px;top:152px;font-size:7px;line-height:9px;color:#222;font-weight:700;">Докладчик</span><div style="position:absolute;left:196px;top:170px;width:110px;height:26px;background:repeating-linear-gradient(#fff 0,#fff 3px,#c7c7d9 3px,#c7c7d9 5px);"></div><div style="position:absolute;left:88px;top:66px;width:164px;height:128px;background:linear-gradient(160deg,#2ec79a,#1fb389 50%,#128a6c);border:1.5px solid #0c5c48;box-shadow:2px 3px 0 #0a4a3a;"></div><span class="t" style="left:100px;top:106px;font-size:6.5px;line-height:9px;color:#0a3a2c;">Расчёт и моделирование финансового<br>развития предприятия в условиях неопред</span><span class="t" style="left:128px;top:160px;font-size:6px;line-height:8px;color:#0a3a2c;">Новосибирск 2018</span><svg style="position:absolute;left:0;top:0" width="360" height="276"><path d="M72 58 L276 210 M276 58 L72 212" stroke="#e07a2c" stroke-width="3.5" fill="none"/></svg><div style="position:absolute;left:158px;top:237px;width:196px;height:8px;background:linear-gradient(#2a3a9a 0,#2a3a9a 55%,#111 55%);"></div></div></div>
<span class="t" style="left:56.30px;top:561.87px;font-size:10.2px;line-height:11.39px;color:#5c5c5c;font-weight:700;">5</span>
<svg style="position:absolute;left:47.5px;top:606px;" width="14" height="13" viewBox="0 0 14 13"><path d="M5.2 0.6 L6.4 2.6 L8.6 1.6 L8.4 4 L10.6 4.8 L8.8 6.2 L9.8 8.4 L7.4 8 L6.4 10.2 L5.2 8.2 L2.8 9.2 L3.2 6.8 L1 5.8 L3 4.6 L2.2 2.2 L4.4 2.8Z" fill="#f39a2b" stroke="#f6b867" stroke-width=".6"/><path d="M7.6 3.4 V11.6 L9.5 9.9 L10.8 12.6 L12 12 L10.7 9.4 L13 9.2Z" fill="#fff" stroke="#111" stroke-width=".8" stroke-linejoin="round"/></svg>
<div style="position:absolute;left:66.3px;top:645.3px;width:88.6px;height:66.6px;overflow:hidden;background:#fff;box-shadow:0 0 0 1px #8e8e8e,0.5px 1.5px 2px 0.5px rgba(0,0,0,.35);"><div class="th" style="position:absolute;left:0;top:0;width:360px;height:276px;transform:scale(.2461);transform-origin:0 0;"><div style="position:absolute;left:18px;top:11px;width:319px;height:22px;background:#99ccff;text-align:center;font-size:16px;line-height:22px;color:#111;font-weight:700;">Оформление</div><span class="t" style="left:20px;top:45.0px;font-size:9.6px;line-height:12.2px;color:#111;-webkit-text-stroke:.55px;">1.</span><span class="t" style="left:46px;top:45.0px;font-size:9.6px;line-height:12.2px;color:#111;font-weight:400;-webkit-text-stroke:.55px;">Фон.</span><span class="t" style="left:20px;top:57.2px;font-size:9.6px;line-height:12.2px;color:#111;-webkit-text-stroke:.55px;">2.</span><span class="t" style="left:46px;top:57.2px;font-size:9.6px;line-height:12.2px;color:#111;font-weight:400;-webkit-text-stroke:.55px;">Шрифт.</span><span class="t" style="left:20px;top:69.4px;font-size:9.6px;line-height:12.2px;color:#111;-webkit-text-stroke:.55px;">3.</span><span class="t" style="left:46px;top:69.4px;font-size:9.6px;line-height:12.2px;color:#111;font-weight:400;-webkit-text-stroke:.55px;">Анимация/звуки.</span><span class="t" style="left:20px;top:81.6px;font-size:9.6px;line-height:12.2px;color:#111;-webkit-text-stroke:.55px;">4.</span><span class="t" style="left:46px;top:81.6px;font-size:9.6px;line-height:12.2px;color:#111;font-weight:400;-webkit-text-stroke:.55px;">Один из вопросов, ответы и т.д.</span><span class="t" style="left:20px;top:93.8px;font-size:9.6px;line-height:12.2px;color:#111;-webkit-text-stroke:.55px;">5.</span><span class="t" style="left:46px;top:93.8px;font-size:9.6px;line-height:12.2px;color:#111;font-weight:400;-webkit-text-stroke:.55px;">Нужный уникальный заголовок?</span><span class="t" style="left:20px;top:106.0px;font-size:9.6px;line-height:12.2px;color:#111;-webkit-text-stroke:.55px;">6.</span><span class="t" style="left:46px;top:106.0px;font-size:9.6px;line-height:12.2px;color:#111;font-weight:400;-webkit-text-stroke:.55px;">Возможные схемы или графики.</span><span class="t" style="left:20px;top:118.19999999999999px;font-size:9.6px;line-height:12.2px;color:#111;-webkit-text-stroke:.55px;">7.</span><span class="t" style="left:46px;top:118.19999999999999px;font-size:9.6px;line-height:12.2px;color:#111;font-weight:400;-webkit-text-stroke:.55px;">Сокращения.</span><span class="t" style="left:20px;top:130.39999999999998px;font-size:9.6px;line-height:12.2px;color:#111;-webkit-text-stroke:.55px;">8.</span><span class="t" style="left:46px;top:130.39999999999998px;font-size:9.6px;line-height:12.2px;color:#111;font-weight:400;-webkit-text-stroke:.55px;">Верхние пределы.</span><span class="t" style="left:20px;top:142.6px;font-size:9.6px;line-height:12.2px;color:#111;-webkit-text-stroke:.55px;">9.</span><span class="t" style="left:46px;top:142.6px;font-size:9.6px;line-height:12.2px;color:#111;font-weight:400;-webkit-text-stroke:.55px;">Диаграмм.</span><span class="t" style="left:20px;top:154.8px;font-size:9.6px;line-height:12.2px;color:#111;-webkit-text-stroke:.55px;">10.</span><span class="t" style="left:46px;top:154.8px;font-size:9.6px;line-height:12.2px;color:#111;font-weight:400;-webkit-text-stroke:.55px;">Извлечение данных из таблиц.</span><span class="t" style="left:20px;top:167.0px;font-size:9.6px;line-height:12.2px;color:#111;-webkit-text-stroke:.55px;">11.</span><span class="t" style="left:46px;top:167.0px;font-size:9.6px;line-height:12.2px;color:#111;font-weight:400;-webkit-text-stroke:.55px;">Числовые и общие.</span><span class="t" style="left:20px;top:179.2px;font-size:9.6px;line-height:12.2px;color:#111;-webkit-text-stroke:.55px;">12.</span><span class="t" style="left:46px;top:179.2px;font-size:9.6px;line-height:12.2px;color:#111;font-weight:400;-webkit-text-stroke:.55px;">Примечания к выводам.</span><span class="t" style="left:20px;top:191.39999999999998px;font-size:9.6px;line-height:12.2px;color:#111;-webkit-text-stroke:.55px;">13.</span><span class="t" style="left:46px;top:191.39999999999998px;font-size:9.6px;line-height:12.2px;color:#111;font-weight:400;-webkit-text-stroke:.55px;">Проверка на орфографию.</span></div></div>
<span class="t" style="left:56.30px;top:644.87px;font-size:10.2px;line-height:11.39px;color:#5c5c5c;font-weight:700;">6</span>
<div style="position:absolute;left:66.3px;top:728.3px;width:88.6px;height:4.4px;overflow:hidden;background:#fff;box-shadow:0 0 0 1px #8e8e8e,0.5px 1.5px 2px 0.5px rgba(0,0,0,.35);"><div class="th" style="position:absolute;left:0;top:0;width:360px;height:276px;transform:scale(.2461);transform-origin:0 0;"><div style="position:absolute;left:18px;top:11px;width:319px;height:22px;background:#99ccff;text-align:center;font-size:16px;line-height:22px;color:#111;font-weight:700;">Оформление. Фон</div></div></div>
<div style="position:absolute;left:56.6px;top:729.6px;width:8px;height:3.2px;overflow:hidden;"><span class="t" style="left:0;top:0;font-size:10.2px;line-height:10.2px;font-weight:700;color:#5c5c5c;">7</span></div>
<div style="position:absolute;left:1151px;top:196px;width:254px;height:540px;background:#efefef;"></div>
<div style="position:absolute;left:1153.5px;top:198px;width:251px;height:536px;background:#f0f0f0;border-left:1px solid #dcdcdc;"></div>
<div style="position:absolute;left:1404.5px;top:196px;width:32px;height:540px;background:#efefef;border-left:1px solid #dedede;"></div>
<span class="t" style="left:1162.00px;top:203.97px;font-size:10.2px;line-height:11.39px;color:#333;font-weight:700;transform:scaleX(0.9901);">Свойства</span>
<svg style="position:absolute;left:1393.5px;top:205.8px;" width="8" height="8" viewBox="0 0 8 8"><path d="M1 1 L7 7 M7 1 L1 7" stroke="#2e2e2e" stroke-width="1.7"/></svg>
<svg style="position:absolute;left:1417px;top:205.4px;" width="9" height="9" viewBox="0 0 9 9"><path d="M0.5 1.5 H5.5 M0.5 4 H5.5" stroke="#444" stroke-width="1.2"/><path d="M3 6 H8 L5.5 8.8Z" fill="#333"/></svg>
<div style="position:absolute;left:1154.5px;top:219.5px;width:250px;height:21px;background:linear-gradient(#e3e3e3,#efefef);"></div>
<svg style="position:absolute;left:1158px;top:227px;" width="7" height="7" viewBox="0 0 7 7"><rect x="0.5" y="0.5" width="6" height="6" fill="#fafafa" stroke="#555" stroke-width="1"/><path d="M2 3.5 H5" stroke="#333" stroke-width="1"/></svg>
<span class="t" style="left:1169.00px;top:224.77px;font-size:10.2px;line-height:11.39px;color:#333;font-weight:700;transform:scaleX(0.9918);">Слайд</span>
<svg style="position:absolute;left:1391.5px;top:226px;" width="10" height="9" viewBox="0 0 10 9"><rect x="0.6" y="0.6" width="8.6" height="7.6" fill="#f4f8fd" stroke="#4f7fc0" stroke-width="1.1"/><path d="M0.6 2.6 H9.2" stroke="#4f7fc0" stroke-width="1"/><path d="M2.4 5.8 H7.4" stroke="#4f7fc0" stroke-width="1" stroke-dasharray="1.2 .8"/></svg>
<div style="position:absolute;left:1241.3px;top:245.6px;width:145.7px;height:19px;background:#fff;border:1px solid #c3c3c3;border-radius:3px;box-shadow:0 1px 1px rgba(0,0,0,.10);"></div><div style="position:absolute;left:1371.3px;top:248.6px;width:1px;height:13px;background:#d6d6d6;"></div><svg style="position:absolute;left:1373.5px;top:249.1px;" width="7" height="12" viewBox="0 0 7 12"><path d="M3.3 1.0 L5.4 4.2 H1.2Z M3.3 11.0 L5.4 7.8 H1.2Z" fill="#5a5a5a"/></svg>
<span class="t" style="left:1195.20px;top:249.89px;font-size:10.4px;line-height:11.62px;color:#474747;transform:scaleX(1.0192);"><u>Ф</u>ормат:</span>
<span class="t" style="left:1244.30px;top:249.89px;font-size:10.4px;line-height:11.62px;color:#474747;transform:scaleX(1.0398);">Пользовательский</span>
<div style="position:absolute;left:1241.3px;top:271.6px;width:145.7px;height:19px;background:#fff;border:1px solid #c3c3c3;border-radius:3px;box-shadow:0 1px 1px rgba(0,0,0,.10);"></div><div style="position:absolute;left:1371.3px;top:274.6px;width:1px;height:13px;background:#d6d6d6;"></div><svg style="position:absolute;left:1373.5px;top:275.1px;" width="7" height="12" viewBox="0 0 7 12"><path d="M3.3 1.0 L5.4 4.2 H1.2Z M3.3 11.0 L5.4 7.8 H1.2Z" fill="#5a5a5a"/></svg>
<span class="t" style="left:1173.40px;top:275.49px;font-size:10.4px;line-height:11.62px;color:#474747;transform:scaleX(1.0076);"><u>О</u>риентация:</span>
<span class="t" style="left:1244.30px;top:275.49px;font-size:10.4px;line-height:11.62px;color:#474747;transform:scaleX(1.0170);">Альбомная</span>
<div style="position:absolute;left:1241.3px;top:297.3px;width:145.7px;height:18.6px;background:#fff;border:1px solid #c3c3c3;border-radius:3px;box-shadow:0 1px 1px rgba(0,0,0,.10);"></div><div style="position:absolute;left:1371.3px;top:300.3px;width:1px;height:12.600000000000001px;background:#d6d6d6;"></div><svg style="position:absolute;left:1373.5px;top:300.6px;" width="7" height="12" viewBox="0 0 7 12"><path d="M3.3 1.0 L5.4 4.2 H1.2Z M3.3 11.0 L5.4 7.8 H1.2Z" fill="#5a5a5a"/></svg>
<span class="t" style="left:1212.80px;top:300.79px;font-size:10.4px;line-height:11.62px;color:#474747;transform:scaleX(1.0303);">Фо<u>н</u>:</span>
<span class="t" style="left:1244.30px;top:300.79px;font-size:10.4px;line-height:11.62px;color:#474747;transform:scaleX(0.9869);">Цвет</span>
<div style="position:absolute;left:1241.5px;top:322.4px;width:145.5px;height:23px;background:#fff;border:1px solid #c3c3c3;border-radius:3px;box-shadow:0 1px 1px rgba(0,0,0,.10);"></div>
<span class="t" style="left:1258.80px;top:328.69px;font-size:10.4px;line-height:11.62px;color:#474747;transform:scaleX(0.9989);"><u>В</u>ставить изображение</span>
<div style="position:absolute;left:1241.3px;top:352.2px;width:145.7px;height:18.6px;background:#fff;border:1px solid #c3c3c3;border-radius:3px;box-shadow:0 1px 1px rgba(0,0,0,.10);"></div><div style="position:absolute;left:1371.3px;top:355.2px;width:1px;height:12.600000000000001px;background:#d6d6d6;"></div><svg style="position:absolute;left:1373.5px;top:355.5px;" width="7" height="12" viewBox="0 0 7 12"><path d="M3.3 1.0 L5.4 4.2 H1.2Z M3.3 11.0 L5.4 7.8 H1.2Z" fill="#5a5a5a"/></svg>
<span class="t" style="left:1165.70px;top:355.59px;font-size:10.4px;line-height:11.62px;color:#474747;transform:scaleX(0.9837);">Мастер-слайд:</span>
<span class="t" style="left:1244.00px;top:355.59px;font-size:10.4px;line-height:11.62px;color:#474747;transform:scaleX(1.0442);">Обычный</span>
<div style="position:absolute;left:1244.6px;top:380.3px;width:12px;height:12px;background:#fff;border:1px solid #c0c0c0;border-radius:2.5px;"></div>
<svg style="position:absolute;left:1244.6px;top:380.3px;" width="12" height="12" viewBox="0 0 12 12"><path d="M2.8 6 L5.2 8.8 L10 2.2" fill="none" stroke="#2f7cc4" stroke-width="1.7"/></svg>
<span class="t" style="left:1262.70px;top:380.59px;font-size:10.4px;line-height:11.62px;color:#474747;transform:scaleX(0.9815);">Фон <u>м</u>астера</span>
<div style="position:absolute;left:1244.6px;top:403.6px;width:12px;height:12px;background:#fff;border:1px solid #c0c0c0;border-radius:2.5px;"></div>
<svg style="position:absolute;left:1244.6px;top:403.6px;" width="12" height="12" viewBox="0 0 12 12"><path d="M2.8 6 L5.2 8.8 L10 2.2" fill="none" stroke="#2f7cc4" stroke-width="1.7"/></svg>
<span class="t" style="left:1262.70px;top:403.99px;font-size:10.4px;line-height:11.62px;color:#474747;transform:scaleX(0.9964);">Об<u>ъ</u>екты мастера</span>
<div style="position:absolute;left:1241.5px;top:424.4px;width:145.5px;height:22.5px;background:#fff;border:1px solid #c3c3c3;border-radius:3px;box-shadow:0 1px 1px rgba(0,0,0,.10);"></div>
<svg style="position:absolute;left:1268px;top:431px;" width="12" height="10" viewBox="0 0 12 10"><rect x="0.5" y="0.5" width="11" height="8.6" fill="#3f6fb5" stroke="#2a4f8a" stroke-width="1"/><rect x="1.8" y="1.8" width="8.4" height="2.4" fill="#dfe9f6"/><path d="M2 6 H10 M2 7.6 H10" stroke="#a9c3e6" stroke-width=".9"/></svg>
<span class="t" style="left:1284.60px;top:430.39px;font-size:10.4px;line-height:11.62px;color:#474747;transform:scaleX(0.9948);"><u>Р</u>ежим мастера</span>
<div style="position:absolute;left:1154.5px;top:453px;width:250px;height:20px;background:linear-gradient(#e3e3e3,#efefef);"></div>
<svg style="position:absolute;left:1158px;top:460px;" width="7" height="7" viewBox="0 0 7 7"><rect x="0.5" y="0.5" width="6" height="6" fill="#fafafa" stroke="#555" stroke-width="1"/><path d="M2 3.5 H5" stroke="#333" stroke-width="1"/></svg>
<span class="t" style="left:1169.00px;top:458.27px;font-size:10.2px;line-height:11.39px;color:#333;font-weight:700;transform:scaleX(1.0713);">Макеты</span>
<div style="position:absolute;left:1154px;top:473px;width:250.3px;height:153.8px;background:#1f1f1f;"></div>
<div style="position:absolute;left:1155.2px;top:474.5px;width:60.4px;height:49px;background:#f2f2f2;"></div><div style="position:absolute;left:1161.7px;top:480.0px;width:47px;height:36.5px;background:linear-gradient(#fdfdfd,#efefef);border:1px solid #a9a9a9;"></div><svg style="position:absolute;left:1161.7px;top:480.0px;" width="47" height="36.5" viewBox="0 0 47 36.5"></svg>
<div style="position:absolute;left:1217.9px;top:474.5px;width:60.4px;height:49px;background:#f2f2f2;"></div><div style="position:absolute;left:1224.4px;top:480.0px;width:47px;height:36.5px;background:linear-gradient(#fdfdfd,#efefef);border:1px solid #a9a9a9;"></div><svg style="position:absolute;left:1224.4px;top:480.0px;" width="47" height="36.5" viewBox="0 0 47 36.5"><rect x="3.5" y="3.5" width="40" height="6.5" fill="#f9f9f9" stroke="#c9c9c9" stroke-width="1"/><path d="M8 6.8 H39" stroke="#5f86b8" stroke-width="1.6"/><rect x="3.5" y="12.5" width="40" height="20.5" fill="#f9f9f9" stroke="#c9c9c9" stroke-width="1"/><path d="M14 20.5 H33" stroke="#5f86b8" stroke-width="1.2"/></svg>
<div style="position:absolute;left:1279.8px;top:474.5px;width:60.4px;height:49px;background:#f2f2f2;"></div><div style="position:absolute;left:1286.3px;top:480.0px;width:47px;height:36.5px;background:linear-gradient(#fdfdfd,#efefef);border:1px solid #a9a9a9;"></div><svg style="position:absolute;left:1286.3px;top:480.0px;" width="47" height="36.5" viewBox="0 0 47 36.5"><rect x="3.5" y="3.5" width="40" height="6.5" fill="#f9f9f9" stroke="#c9c9c9" stroke-width="1"/><path d="M8 6.8 H39" stroke="#5f86b8" stroke-width="1.6"/><rect x="3.5" y="12.5" width="40" height="20.5" fill="#f9f9f9" stroke="#c9c9c9" stroke-width="1"/></svg>
<div style="position:absolute;left:1342.0px;top:474.5px;width:60.4px;height:49px;background:#f2f2f2;"></div><div style="position:absolute;left:1348.5px;top:480.0px;width:47px;height:36.5px;background:linear-gradient(#fdfdfd,#efefef);border:1px solid #a9a9a9;"></div><svg style="position:absolute;left:1348.5px;top:480.0px;" width="47" height="36.5" viewBox="0 0 47 36.5"><rect x="3.5" y="3.5" width="40" height="6.5" fill="#f9f9f9" stroke="#c9c9c9" stroke-width="1"/><path d="M8 6.8 H39" stroke="#5f86b8" stroke-width="1.6"/><rect x="3.5" y="12.5" width="18.5" height="20.5" fill="#f9f9f9" stroke="#c9c9c9" stroke-width="1"/><rect x="25" y="12.5" width="18.5" height="20.5" fill="#f9f9f9" stroke="#c9c9c9" stroke-width="1"/></svg>
<div style="position:absolute;left:1155.2px;top:525.2px;width:60.4px;height:49px;background:#f2f2f2;"></div><div style="position:absolute;left:1161.7px;top:530.7px;width:47px;height:36.5px;background:linear-gradient(#fdfdfd,#efefef);border:1px solid #a9a9a9;"></div><svg style="position:absolute;left:1161.7px;top:530.7px;" width="47" height="36.5" viewBox="0 0 47 36.5"><path d="M8 6.8 H39" stroke="#5f86b8" stroke-width="1.6"/></svg>
<div style="position:absolute;left:1217.9px;top:525.2px;width:60.4px;height:49px;background:#f2f2f2;"></div><div style="position:absolute;left:1224.4px;top:530.7px;width:47px;height:36.5px;background:linear-gradient(#fdfdfd,#efefef);border:1px solid #a9a9a9;"></div><svg style="position:absolute;left:1224.4px;top:530.7px;" width="47" height="36.5" viewBox="0 0 47 36.5"><path d="M13 16.5 H34" stroke="#5f86b8" stroke-width="1.6"/><path d="M17 21 H30" stroke="#5f86b8" stroke-width="1.2"/></svg>
<div style="position:absolute;left:1279.8px;top:525.2px;width:60.4px;height:49px;background:#f2f2f2;"></div><div style="position:absolute;left:1286.3px;top:530.7px;width:47px;height:36.5px;background:linear-gradient(#fdfdfd,#efefef);border:1px solid #a9a9a9;"></div><svg style="position:absolute;left:1286.3px;top:530.7px;" width="47" height="36.5" viewBox="0 0 47 36.5"><rect x="3.5" y="3.5" width="40" height="6.5" fill="#f9f9f9" stroke="#c9c9c9" stroke-width="1"/><path d="M8 6.8 H39" stroke="#5f86b8" stroke-width="1.6"/><rect x="3.5" y="12.5" width="18.5" height="9" fill="#f9f9f9" stroke="#c9c9c9" stroke-width="1"/><rect x="3.5" y="24" width="18.5" height="9" fill="#f9f9f9" stroke="#c9c9c9" stroke-width="1"/><rect x="25" y="12.5" width="18.5" height="20.5" fill="#f9f9f9" stroke="#c9c9c9" stroke-width="1"/></svg>
<div style="position:absolute;left:1342.0px;top:525.2px;width:60.4px;height:49px;background:#f2f2f2;"></div><div style="position:absolute;left:1348.5px;top:530.7px;width:47px;height:36.5px;background:linear-gradient(#fdfdfd,#efefef);border:1px solid #a9a9a9;"></div><svg style="position:absolute;left:1348.5px;top:530.7px;" width="47" height="36.5" viewBox="0 0 47 36.5"><rect x="3.5" y="3.5" width="40" height="6.5" fill="#f9f9f9" stroke="#c9c9c9" stroke-width="1"/><path d="M8 6.8 H39" stroke="#5f86b8" stroke-width="1.6"/><rect x="3.5" y="12.5" width="18.5" height="20.5" fill="#f9f9f9" stroke="#c9c9c9" stroke-width="1"/><rect x="25" y="12.5" width="18.5" height="9" fill="#f9f9f9" stroke="#c9c9c9" stroke-width="1"/><rect x="25" y="24" width="18.5" height="9" fill="#f9f9f9" stroke="#c9c9c9" stroke-width="1"/></svg>
<div style="position:absolute;left:1155.2px;top:576.4px;width:60.4px;height:49px;background:#f2f2f2;"></div><div style="position:absolute;left:1161.7px;top:581.9px;width:47px;height:36.5px;background:linear-gradient(#fdfdfd,#efefef);border:1px solid #a9a9a9;"></div><svg style="position:absolute;left:1161.7px;top:581.9px;" width="47" height="36.5" viewBox="0 0 47 36.5"><rect x="3.5" y="3.5" width="40" height="6.5" fill="#f9f9f9" stroke="#c9c9c9" stroke-width="1"/><path d="M8 6.8 H39" stroke="#5f86b8" stroke-width="1.6"/><rect x="3.5" y="12.5" width="18.5" height="9" fill="#f9f9f9" stroke="#c9c9c9" stroke-width="1"/><rect x="25" y="12.5" width="18.5" height="9" fill="#f9f9f9" stroke="#c9c9c9" stroke-width="1"/><rect x="3.5" y="24" width="40" height="9" fill="#f9f9f9" stroke="#c9c9c9" stroke-width="1"/></svg>
<div style="position:absolute;left:1217.9px;top:576.4px;width:60.4px;height:49px;background:#f2f2f2;"></div><div style="position:absolute;left:1224.4px;top:581.9px;width:47px;height:36.5px;background:linear-gradient(#fdfdfd,#efefef);border:1px solid #a9a9a9;"></div><svg style="position:absolute;left:1224.4px;top:581.9px;" width="47" height="36.5" viewBox="0 0 47 36.5"><rect x="3.5" y="3.5" width="40" height="6.5" fill="#f9f9f9" stroke="#c9c9c9" stroke-width="1"/><path d="M8 6.8 H39" stroke="#5f86b8" stroke-width="1.6"/><rect x="3.5" y="12.5" width="40" height="9" fill="#f9f9f9" stroke="#c9c9c9" stroke-width="1"/><rect x="3.5" y="24" width="40" height="9" fill="#f9f9f9" stroke="#c9c9c9" stroke-width="1"/></svg>
<div style="position:absolute;left:1279.8px;top:576.4px;width:60.4px;height:49px;background:#f2f2f2;"></div><div style="position:absolute;left:1286.3px;top:581.9px;width:47px;height:36.5px;background:linear-gradient(#fdfdfd,#efefef);border:1px solid #a9a9a9;"></div><svg style="position:absolute;left:1286.3px;top:581.9px;" width="47" height="36.5" viewBox="0 0 47 36.5"><rect x="3.5" y="3.5" width="40" height="6.5" fill="#f9f9f9" stroke="#c9c9c9" stroke-width="1"/><path d="M8 6.8 H39" stroke="#5f86b8" stroke-width="1.6"/><rect x="3.5" y="12.5" width="18.5" height="9" fill="#f9f9f9" stroke="#c9c9c9" stroke-width="1"/><rect x="25" y="12.5" width="18.5" height="9" fill="#f9f9f9" stroke="#c9c9c9" stroke-width="1"/><rect x="3.5" y="24" width="18.5" height="9" fill="#f9f9f9" stroke="#c9c9c9" stroke-width="1"/><rect x="25" y="24" width="18.5" height="9" fill="#f9f9f9" stroke="#c9c9c9" stroke-width="1"/></svg>
<div style="position:absolute;left:1342.0px;top:576.4px;width:60.4px;height:49px;background:#f2f2f2;"></div><div style="position:absolute;left:1348.5px;top:581.9px;width:47px;height:36.5px;background:linear-gradient(#fdfdfd,#efefef);border:1px solid #a9a9a9;"></div><svg style="position:absolute;left:1348.5px;top:581.9px;" width="47" height="36.5" viewBox="0 0 47 36.5"><rect x="3.5" y="3.5" width="40" height="6.5" fill="#f9f9f9" stroke="#c9c9c9" stroke-width="1"/><path d="M8 6.8 H39" stroke="#5f86b8" stroke-width="1.6"/><rect x="3.5" y="12.5" width="11.5" height="9" fill="#f9f9f9" stroke="#c9c9c9" stroke-width="1"/><rect x="3.5" y="24.0" width="11.5" height="9" fill="#f9f9f9" stroke="#c9c9c9" stroke-width="1"/><rect x="17.3" y="12.5" width="11.5" height="9" fill="#f9f9f9" stroke="#c9c9c9" stroke-width="1"/><rect x="17.3" y="24.0" width="11.5" height="9" fill="#f9f9f9" stroke="#c9c9c9" stroke-width="1"/><rect x="31.1" y="12.5" width="11.5" height="9" fill="#f9f9f9" stroke="#c9c9c9" stroke-width="1"/><rect x="31.1" y="24.0" width="11.5" height="9" fill="#f9f9f9" stroke="#c9c9c9" stroke-width="1"/></svg>
<div style="position:absolute;left:1408.2px;top:229px;width:24.4px;height:24.2px;background:#f6f6f6;border:1px solid #c9c9c9;border-radius:3px;"></div>
<svg style="position:absolute;left:1411.4px;top:232px;" width="18" height="18" viewBox="0 0 18 18"><path d="M2.2 3.4 A3.4 3.4 0 0 0 6.6 7.6 L10.6 11.6 A3.4 3.4 0 0 0 14.8 15.8 L15.8 14.8 L13.6 14.6 L13 12.4 L15 11.6 L15.8 12.4 A3.4 3.4 0 0 0 11.6 10.4 L7.6 6.4 A3.4 3.4 0 0 0 3.2 2.2 L5.2 3.2 L4.8 5.2 L2.6 5.4Z" fill="#f2f2f2" stroke="#8e8e8e" stroke-width="1.1" stroke-linejoin="round"/></svg>
<svg style="position:absolute;left:1411.4px;top:260px;" width="18" height="16" viewBox="0 0 18 16"><rect x="6.5" y="1" width="11" height="12.5" fill="#7a4c8a" stroke="#4e2d5c" stroke-width="1"/><rect x="8.5" y="3" width="7" height="3" fill="#e9dff0"/><rect x="8.5" y="7.5" width="7" height="4" fill="#b99ac6"/><rect x="0.8" y="2.2" width="9" height="10.6" fill="#f4f4f4" stroke="#555" stroke-width="1"/><path d="M2.4 5 H4 M5.2 5 H8.4 M2.4 7.6 H4 M5.2 7.6 H8.4 M2.4 10.2 H4 M5.2 10.2 H8.4" stroke="#666" stroke-width="1"/></svg>
<svg style="position:absolute;left:1411.4px;top:286px;" width="19" height="19" viewBox="0 0 19 19"><path d="M8.6 1 L11 6.6 L17 7.2 L12.4 11.2 L13.8 17.2 L8.6 14 L3.4 17.2 L4.8 11.2 L0.6 7.2 L6.4 6.6Z" fill="#f7ec5a" stroke="#c9a80c" stroke-width="1.3" stroke-linejoin="round"/><path d="M14 12.5 H18 M14 15 H18 M14 17.4 H18" stroke="#b9b9a0" stroke-width="1.1"/></svg>
<svg style="position:absolute;left:1411.4px;top:314px;" width="18" height="15" viewBox="0 0 18 15"><rect x="0.6" y="0.6" width="16.6" height="13.4" fill="#3f73bd" stroke="#27508f" stroke-width="1.1"/><rect x="2.4" y="2.6" width="13" height="3.4" fill="#e4edf8"/><path d="M3 8.6 H15 M3 11 H15" stroke="#9dbbe3" stroke-width="1.2"/></svg>
<svg style="position:absolute;left:1411.4px;top:340px;" width="18" height="19" viewBox="0 0 18 19"><path d="M1 18 L17 18 L1 6Z" fill="#6db544" stroke="#3d7f22" stroke-width="1"/><path d="M4.5 1 H16.5 V4.2 H15.4 L14.6 2.6 H11.8 V13.2 L13.4 13.8 V14.8 H7.8 V13.8 L9.4 13.2 V2.6 H6.6 L5.8 4.2 H4.5Z" fill="#1e1e1e"/></svg>
<svg style="position:absolute;left:1411.4px;top:366px;" width="18" height="19" viewBox="0 0 18 19"><path d="M6.5 3.5 L9 0.8 L11.5 3.5" fill="none" stroke="#7a5512" stroke-width="1.1"/><rect x="0.8" y="3.6" width="16.4" height="13.4" rx="1" fill="#e9a72c" stroke="#a36a0c" stroke-width="1.1"/><rect x="3" y="6" width="12" height="8.2" fill="#f7e5b5" stroke="#8a5c12" stroke-width=".8"/><path d="M9 13.6 V9.4 M6.8 7.4 L9 9.8 L11.2 7.4" stroke="#4d6b2a" stroke-width="1.3" fill="none"/></svg>
<svg style="position:absolute;left:1411.4px;top:395px;" width="18" height="18" viewBox="0 0 18 18"><circle cx="9" cy="9" r="7.6" fill="#f7f7f7" stroke="#8b8b8b" stroke-width="1.7"/><path d="M5.2 4.4 L10.6 8 L8 10.2Z" fill="#c5372c"/><path d="M12.8 13.6 L7.4 10 L10 7.8Z" fill="#46607a"/></svg>
<div style="position:absolute;left:36.5px;top:164px;width:1400px;height:1px;background:#d9d9d9;"></div>
<div style="position:absolute;left:36.5px;top:165px;width:1400px;height:1px;background:#f8f8f8;"></div>
<div style="position:absolute;left:49.5px;top:167.5px;width:23px;height:25px;background:#fcfcfc;border:1px solid #cdcdcd;border-radius:2.5px;"></div>
<div style="position:absolute;left:854.3px;top:137px;width:23.5px;height:25.5px;background:#fcfcfc;border:1px solid #cdcdcd;border-radius:2.5px;"></div>
<svg style="position:absolute;left:51.0px;top:140.0px;" width="18" height="18" viewBox="0 0 18 18"><path d="M2.5 1 H11.5 L15.5 5 V17 H2.5Z" fill="#f6ece2" stroke="#8a4a1c" stroke-width="1.1"/><path d="M11.5 1 V5 H15.5Z" fill="#7a3f18" stroke="#6a3410" stroke-width=".9"/><rect x="4.6" y="7.2" width="8.8" height="7" rx="1" fill="#f2c9a6" stroke="#c0602a" stroke-width="1.1"/><rect x="6.6" y="9.2" width="4.8" height="3" fill="#fbeee2" stroke="#c0602a" stroke-width=".7"/></svg>
<svg style="position:absolute;left:77.1px;top:147.79999999999998px;" width="4.8" height="3" viewBox="0 0 4.8 3"><path d="M0 0 H4.8 L2.4 3Z" fill="#1b1b1b"/></svg>
<svg style="position:absolute;left:88.8px;top:140.0px;" width="18" height="18" viewBox="0 0 18 18"><path d="M1.5 3.5 H7 L8.5 5.5 H13.5 V8 H1.5Z" fill="#d9c9a4" stroke="#8f7c52" stroke-width="1"/><rect x="3.5" y="4.2" width="9" height="6" fill="#f7f3e8" stroke="#b5a782" stroke-width=".7"/><path d="M1.2 8 H16.8 L15.8 16.5 H2.2Z" fill="#e6d4a8" stroke="#8f7c52" stroke-width="1.1"/><path d="M2.4 9.2 H15.6" stroke="#f5ecd2" stroke-width="1"/></svg>
<svg style="position:absolute;left:114.3px;top:147.79999999999998px;" width="4.8" height="3" viewBox="0 0 4.8 3"><path d="M0 0 H4.8 L2.4 3Z" fill="#1b1b1b"/></svg>
<svg style="position:absolute;left:126.3px;top:140.0px;" width="18" height="18" viewBox="0 0 18 18"><rect x="1" y="1.2" width="16" height="15.8" rx="1.6" fill="#5a2a82" stroke="#2e1248" stroke-width="1.2"/><rect x="3.6" y="2.2" width="10.8" height="8" fill="#f6f6f2" stroke="#cfcfc4" stroke-width=".6"/><path d="M5 4.4 H13 M5 6.4 H13 M5 8.2 H13" stroke="#b9c7a6" stroke-width=".8"/><rect x="4.6" y="12.2" width="8.8" height="4.8" fill="#2c1640"/><rect x="6.2" y="13" width="3.2" height="3.2" fill="#cfcfd6"/><rect x="11" y="13.2" width="1.6" height="1.6" fill="#5cc24a"/></svg>
<svg style="position:absolute;left:152.9px;top:147.79999999999998px;" width="4.8" height="3" viewBox="0 0 4.8 3"><path d="M0 0 H4.8 L2.4 3Z" fill="#1b1b1b"/></svg>
<div style="position:absolute;left:165.7px;top:139.5px;width:1px;height:19px;background:#d4d4d4;"></div>
<svg style="position:absolute;left:172.3px;top:140.0px;" width="18" height="18" viewBox="0 0 18 18"><path d="M2 1.5 H12.5 L16 5 V16.5 H2Z" fill="#fbfbfb" stroke="#9a9a9a" stroke-width="1"/><path d="M12.5 2 C9 5.5 6 8.5 3.4 9.6 C6.6 10.6 10 13 13.4 15.8 C11.6 12 11.2 6.5 12.5 2Z" fill="none" stroke="#d1201c" stroke-width="1.8" stroke-linejoin="round"/><path d="M14.6 2.4 V16" stroke="#c32a26" stroke-width="1.4"/></svg>
<svg style="position:absolute;left:198.0px;top:140.0px;" width="18" height="18" viewBox="0 0 18 18"><rect x="4.4" y="1.4" width="9.2" height="5" fill="#f4f4f4" stroke="#222" stroke-width="1.3"/><rect x="0.9" y="4.8" width="16.2" height="9.2" rx="2.2" fill="#2a2a2a" stroke="#111" stroke-width="1"/><path d="M3 7 H15" stroke="#d9d9d9" stroke-width="1.6"/><rect x="4" y="10.8" width="10" height="6" fill="#fafafa" stroke="#222" stroke-width="1.3"/><path d="M5.8 13.8 H12.2" stroke="#999" stroke-width="1"/></svg>
<div style="position:absolute;left:222.3px;top:139.5px;width:1px;height:19px;background:#d4d4d4;"></div>
<svg style="position:absolute;left:230.0px;top:140.0px;" width="18" height="18" viewBox="0 0 18 18"><path d="M5.2 0.8 L10.6 11 M12.8 0.8 L7.4 11" stroke="#a9a9a9" stroke-width="2.1" stroke-linecap="round"/><path d="M5.2 0.8 L10.6 11 M12.8 0.8 L7.4 11" stroke="#e9e9e9" stroke-width=".8" stroke-linecap="round"/><circle cx="5.4" cy="13.6" r="2.6" fill="#e9a0a0" stroke="#c4211f" stroke-width="2"/><circle cx="12.6" cy="13.6" r="2.6" fill="#e9a0a0" stroke="#c4211f" stroke-width="2"/></svg>
<svg style="position:absolute;left:255.5px;top:140.0px;" width="18" height="18" viewBox="0 0 18 18"><rect x="1.2" y="1.4" width="9.6" height="9.6" fill="#f7f7f7" stroke="#8d8d8d" stroke-width="1.1"/><path d="M3 4 H9 M3 6 H9 M3 8 H7.4" stroke="#bdbdbd" stroke-width=".9"/><rect x="7.2" y="7" width="9.6" height="9.6" fill="#f7f7f7" stroke="#8d8d8d" stroke-width="1.1"/><path d="M9 9.8 H15 M9 11.8 H15 M9 13.8 H13.4" stroke="#bdbdbd" stroke-width=".9"/></svg>
<svg style="position:absolute;left:280.6px;top:140.0px;" width="18" height="18" viewBox="0 0 18 18"><rect x="1.6" y="3" width="12.4" height="13.6" rx="1.2" fill="#dcdcdc" stroke="#c3c3c3" stroke-width="1"/><rect x="5" y="1" width="5.6" height="3.6" rx="1" fill="#d2d2d2" stroke="#bdbdbd" stroke-width=".8"/><rect x="6.6" y="7" width="9.4" height="9.6" fill="#ececec" stroke="#c9c9c9" stroke-width="1"/></svg>
<svg style="position:absolute;left:306.40000000000003px;top:147.79999999999998px;" width="4.8" height="3" viewBox="0 0 4.8 3"><path d="M0 0 H4.8 L2.4 3Z" fill="#bdbdbd"/></svg>
<div style="position:absolute;left:318.3px;top:139.5px;width:1px;height:19px;background:#d4d4d4;"></div>
<svg style="position:absolute;left:327.0px;top:140.0px;" width="18" height="18" viewBox="0 0 18 18"><path d="M10.4 0.8 L12.6 1.4 L11.6 7.2 L9.2 7Z" fill="#d9d9d9" stroke="#c6c6c6" stroke-width=".8"/><path d="M8.4 7 H12.6 L14 12 C11 12.6 9 13.4 7.6 16.6 L2 17 C5.4 14.6 7.2 11.6 8.4 7Z" fill="#dedede" stroke="#c9c9c9" stroke-width=".9"/></svg>
<div style="position:absolute;left:350.3px;top:139.5px;width:1px;height:19px;background:#d4d4d4;"></div>
<svg style="position:absolute;left:357.7px;top:140.0px;" width="18" height="18" viewBox="0 0 18 18"><path d="M7 3 L1.6 7.6 L7 12.2 V9.4 H12 C14.4 9.4 15.4 11 15 13.4 C17 10.4 16 6 12 5.8 H7Z" fill="#e2e2e2" stroke="#cdcdcd" stroke-width="1" stroke-linejoin="round"/></svg>
<svg style="position:absolute;left:383.1px;top:147.79999999999998px;" width="4.8" height="3" viewBox="0 0 4.8 3"><path d="M0 0 H4.8 L2.4 3Z" fill="#bdbdbd"/></svg>
<svg style="position:absolute;left:396.0px;top:140.0px;" width="18" height="18" viewBox="0 0 18 18"><path d="M11 3 L16.4 7.6 L11 12.2 V9.4 H6 C3.6 9.4 2.6 11 3 13.4 C1 10.4 2 6 6 5.8 H11Z" fill="#e2e2e2" stroke="#cdcdcd" stroke-width="1" stroke-linejoin="round"/></svg>
<svg style="position:absolute;left:421.8px;top:147.79999999999998px;" width="4.8" height="3" viewBox="0 0 4.8 3"><path d="M0 0 H4.8 L2.4 3Z" fill="#bdbdbd"/></svg>
<div style="position:absolute;left:434.2px;top:139.5px;width:1px;height:19px;background:#d4d4d4;"></div>
<svg style="position:absolute;left:441.8px;top:140.0px;" width="18" height="18" viewBox="0 0 18 18"><circle cx="7.2" cy="7" r="5.2" fill="#f7f7fb" fill-opacity=".5" stroke="#1e2a78" stroke-width="2.3"/><path d="M10.8 10.8 L16 16.4" stroke="#1a1a1a" stroke-width="2.6" stroke-linecap="round"/><path d="M16.2 2 L17.6 3.4 L7 14.6 L4 15.8 L5.2 12.8Z" fill="#f0a23a" stroke="#b4641a" stroke-width=".7"/><path d="M15.2 3 L16.6 4.4 L17.6 3.4 L16.2 2Z" fill="#e0566a"/><path d="M4 15.8 L5.2 12.8 L7 14.6Z" fill="#f2d9a6"/><path d="M4 15.8 L4.6 14.4 L5.4 15.2Z" fill="#222"/></svg>
<svg style="position:absolute;left:467.2px;top:140.0px;" width="18" height="18" viewBox="0 0 18 18"><text x="0.4" y="8.2" font-size="9.4" font-weight="700" font-family="Liberation Sans,sans-serif" fill="#151515" textLength="17.2" lengthAdjust="spacingAndGlyphs">Abc</text><path d="M6.6 12.4 L9.8 15.6 L16.6 9.4" fill="none" stroke="#3f9a1c" stroke-width="2.6"/><path d="M6.6 12.4 L9.8 15.6 L16.6 9.4" fill="none" stroke="#7fd44a" stroke-width="1.1"/></svg>
<div style="position:absolute;left:491.3px;top:139.5px;width:1px;height:19px;background:#d4d4d4;"></div>
<svg style="position:absolute;left:498.5px;top:140.0px;" width="18" height="18" viewBox="0 0 18 18"><rect x="0.6" y="0.8" width="1" height="1" fill="#9a9a9a"/><rect x="0.6" y="4.8" width="1" height="1" fill="#9a9a9a"/><rect x="0.6" y="8.8" width="1" height="1" fill="#9a9a9a"/><rect x="0.6" y="12.8" width="1" height="1" fill="#9a9a9a"/><rect x="0.6" y="16.8" width="1" height="1" fill="#9a9a9a"/><rect x="4.6" y="0.8" width="1" height="1" fill="#9a9a9a"/><rect x="4.6" y="4.8" width="1" height="1" fill="#9a9a9a"/><rect x="4.6" y="8.8" width="1" height="1" fill="#9a9a9a"/><rect x="4.6" y="12.8" width="1" height="1" fill="#9a9a9a"/><rect x="4.6" y="16.8" width="1" height="1" fill="#9a9a9a"/><rect x="8.6" y="0.8" width="1" height="1" fill="#9a9a9a"/><rect x="8.6" y="4.8" width="1" height="1" fill="#9a9a9a"/><rect x="8.6" y="8.8" width="1" height="1" fill="#9a9a9a"/><rect x="8.6" y="12.8" width="1" height="1" fill="#9a9a9a"/><rect x="8.6" y="16.8" width="1" height="1" fill="#9a9a9a"/><rect x="12.6" y="0.8" width="1" height="1" fill="#9a9a9a"/><rect x="12.6" y="4.8" width="1" height="1" fill="#9a9a9a"/><rect x="12.6" y="8.8" width="1" height="1" fill="#9a9a9a"/><rect x="12.6" y="12.8" width="1" height="1" fill="#9a9a9a"/><rect x="12.6" y="16.8" width="1" height="1" fill="#9a9a9a"/><rect x="16.6" y="0.8" width="1" height="1" fill="#9a9a9a"/><rect x="16.6" y="4.8" width="1" height="1" fill="#9a9a9a"/><rect x="16.6" y="8.8" width="1" height="1" fill="#9a9a9a"/><rect x="16.6" y="12.8" width="1" height="1" fill="#9a9a9a"/><rect x="16.6" y="16.8" width="1" height="1" fill="#9a9a9a"/></svg>
<svg style="position:absolute;left:523.8px;top:141px;" width="23" height="17.4" viewBox="0 0 23 17.4"><rect x="0.6" y="0.6" width="21.8" height="16.2" fill="#fdfdfd" stroke="#a3a3a3" stroke-width="1.1"/><path d="M5 3.8 H18" stroke="#a9a9a9" stroke-width="1.1"/><path d="M3.4 7.4 H19.6 M3.4 10.4 H19.6 M3.4 13.4 H19.6" stroke="#e3e3e3" stroke-width="1"/></svg>
<svg style="position:absolute;left:555.9px;top:147.79999999999998px;" width="4.8" height="3" viewBox="0 0 4.8 3"><path d="M0 0 H4.8 L2.4 3Z" fill="#1b1b1b"/></svg>
<svg style="position:absolute;left:569.3px;top:140.0px;" width="18" height="18" viewBox="0 0 18 18"><rect x="0.6" y="1.6" width="16.8" height="14" rx="1.2" fill="#4d7fc2" stroke="#2f5c9e" stroke-width="1.1"/><rect x="2.6" y="3.8" width="12.8" height="2.6" fill="#dbe7f6"/><path d="M3 9 H11 M3 11.2 H13 M3 13.2 H8" stroke="#a9c6ea" stroke-width="1.1"/></svg>
<div style="position:absolute;left:594.3px;top:139.5px;width:1px;height:19px;background:#d4d4d4;"></div>
<svg style="position:absolute;left:600.3px;top:140.0px;" width="18" height="18" viewBox="0 0 18 18"><rect x="0.8" y="1.6" width="16.4" height="11" fill="#f5f5f5" stroke="#7a7a7a" stroke-width="1.1"/><path d="M2 2.8 L10.6 7 L2 11.4Z" fill="#3d74c0" stroke="#2a559a" stroke-width=".8"/><path d="M11.6 4.4 H15.6 M11.6 6.4 H15.6 M11.6 8.4 H15.6" stroke="#c9c9c9" stroke-width=".9"/><path d="M9 12.6 V14.2 M9 14 L5.4 17.2 M9 14 L12.6 17.2" stroke="#8b8b8b" stroke-width="1.3" fill="none"/></svg>
<svg style="position:absolute;left:626.0px;top:140.0px;" width="18" height="18" viewBox="0 0 18 18"><rect x="0.8" y="1.6" width="16.4" height="11" fill="#f5f5f5" stroke="#7a7a7a" stroke-width="1.1"/><rect x="1.8" y="2.6" width="4" height="9" fill="#6cb83a" stroke="#3f8a1a" stroke-width=".7"/><rect x="6.6" y="2.6" width="4" height="9" fill="#6cb83a" stroke="#3f8a1a" stroke-width=".7"/><path d="M12 4.4 H15.8 M12 6.4 H15.8 M12 8.4 H15.8" stroke="#b9b9b9" stroke-width=".9"/><path d="M9 12.6 V14.2 M9 14 L5.4 17.2 M9 14 L12.6 17.2" stroke="#8b8b8b" stroke-width="1.3" fill="none"/></svg>
<div style="position:absolute;left:650.5px;top:139.5px;width:1px;height:19px;background:#e6e6e6;"></div>
<svg style="position:absolute;left:657.5px;top:140.0px;" width="18" height="18" viewBox="0 0 18 18"><rect x="0.8" y="2" width="16.4" height="13.2" fill="#fcfcfc" stroke="#4a4a4a" stroke-width="1.1"/><rect x="0.8" y="2" width="16.4" height="3" fill="#cfcfcf" stroke="#4a4a4a" stroke-width="1"/><path d="M0.8 8.4 H17.2 M0.8 11.8 H17.2 M6.2 2 V15.2 M11.8 2 V15.2" stroke="#6a6a6a" stroke-width=".9"/></svg>
<svg style="position:absolute;left:683.9px;top:147.79999999999998px;" width="4.8" height="3" viewBox="0 0 4.8 3"><path d="M0 0 H4.8 L2.4 3Z" fill="#1b1b1b"/></svg>
<svg style="position:absolute;left:696.3px;top:140.2px;" width="20" height="18" viewBox="0 0 20 18"><rect x="0.6" y="1.6" width="18.8" height="14.6" rx="1" fill="#cfc8b4" stroke="#9a9384" stroke-width="1"/><rect x="2.4" y="3.4" width="15.2" height="11" fill="#4a2c0c"/><path d="M2.4 14.4 V10.4 C6 7 13 7 17.6 10.4 V14.4Z" fill="#d98a1c"/><path d="M3.4 14.4 V12.4 C7 10.2 13 10.2 16.6 12.4 V14.4Z" fill="#f7d26a"/><path d="M10 14.4 V8 M10 10 L7.4 6.4 M10 9.4 L12.6 6" stroke="#2e1c06" stroke-width="1.3" fill="none"/></svg>
<svg style="position:absolute;left:723.0px;top:140.0px;" width="18" height="18" viewBox="0 0 18 18"><rect x="0.8" y="1.2" width="10.4" height="15.6" fill="#5d5d5d" stroke="#333" stroke-width=".9"/><rect x="3.2" y="2.2" width="5.6" height="6" fill="#a9c98a"/><rect x="3.2" y="9.6" width="5.6" height="6" fill="#c9c9c9"/><path d="M1.9 2 V16 M10.1 2 V16" stroke="#e9e9e9" stroke-width="1" stroke-dasharray="1.3 1.3"/><path d="M11.4 13.4 V4 L16.6 5.6 V14.6" fill="none" stroke="#4c9a22" stroke-width="1.6"/><ellipse cx="10" cy="14" rx="2.2" ry="1.8" fill="#6fc03a" stroke="#3f8a1a" stroke-width=".7"/><ellipse cx="15.2" cy="15.2" rx="2.2" ry="1.8" fill="#6fc03a" stroke="#3f8a1a" stroke-width=".7"/></svg>
<svg style="position:absolute;left:748.3px;top:140.0px;" width="18" height="18" viewBox="0 0 18 18"><circle cx="9" cy="9" r="8" fill="#e0241c" stroke="#a3120c" stroke-width=".9"/><path d="M9 9 L16.6 6.6 A8 8 0 0 1 14 15.2Z" fill="#5b8fd6" stroke="#2f5ea3" stroke-width=".6"/><path d="M9 9 L14 15.2 A8 8 0 0 1 8.4 17Z" fill="#79c043" stroke="#4a8a22" stroke-width=".6"/></svg>
<div style="position:absolute;left:773.5px;top:139.5px;width:1px;height:19px;background:#d4d4d4;"></div>
<svg style="position:absolute;left:780.0px;top:140.0px;" width="18" height="18" viewBox="0 0 18 18"><rect x="1" y="1" width="16" height="16" fill="#fff" stroke="#111" stroke-width="1.3" stroke-dasharray="1.6 1.3"/><path d="M3.6 3.2 H14.4 V6.4 H13.4 L12.6 4.6 H10.2 V13.4 L11.8 14 V15 H6.2 V14 L7.8 13.4 V4.6 H5.4 L4.6 6.4 H3.6Z" fill="#151515"/></svg>
<svg style="position:absolute;left:805.8px;top:140.0px;" width="18" height="18" viewBox="0 0 18 18"><path d="M6.4 3.8 L9 0.8 L11.6 3.8" fill="none" stroke="#9a6a1c" stroke-width="1"/><rect x="0.9" y="3.8" width="16.2" height="11.6" rx="1" fill="#d99a3a" stroke="#9a6214" stroke-width="1.1"/><rect x="2.8" y="5.6" width="12.4" height="8" fill="#fbf6ea" stroke="#8a5c12" stroke-width=".6"/><text x="6.2" y="12.6" font-size="8" font-weight="700" font-family="Liberation Sans,sans-serif" fill="#5a2d82">A</text></svg>
<svg style="position:absolute;left:831.3px;top:140.0px;" width="18" height="18" viewBox="0 0 18 18"><g fill="none" stroke="#4a4a4a" stroke-width="1.2"><rect x="1.6" y="6" width="6.6" height="5" rx="2.2"/><rect x="9.8" y="6" width="6.6" height="5" rx="2.2"/><path d="M6 8.5 H12"/><path d="M2 4.4 C5 3 7 5 9 5.6 C11 5 13 3 16 4.4 M2 12.6 C5 14 7 12 9 11.4 C11 12 13 14 16 12.6" stroke-width="1"/></g></svg>
<svg style="position:absolute;left:857.0px;top:140.0px;" width="18" height="18" viewBox="0 0 18 18"><rect x="0.8" y="0.8" width="16.4" height="16.4" rx="1.8" fill="#5f93d4" stroke="#2f62a8" stroke-width="1.1"/><g fill="#e9f1fb" stroke="#2a4f88" stroke-width=".7"><rect x="3" y="3" width="4.8" height="4.8" rx=".6"/><circle cx="12.6" cy="5.4" r="2.4"/><circle cx="5.4" cy="12.6" r="2.4"/><path d="M10.4 15 L12.8 10.2 L15.2 15Z"/></g></svg>
<svg style="position:absolute;left:895.5px;top:140.0px;" width="18" height="18" viewBox="0 0 18 18"><rect x="0.7" y="1.4" width="15" height="11.2" fill="#fbfbfb" stroke="#9d9d9d" stroke-width="1.1"/><path d="M2.4 3.6 H14" stroke="#e2e2e2" stroke-width="1"/><path d="M11.2 7.6 H13.8 V10.2 H16.6 V12.8 H13.8 V15.6 H11.2 V12.8 H8.4 V10.2 H11.2Z" fill="#6ac82c" stroke="#2f8a0c" stroke-width="1" stroke-linejoin="round"/></svg>
<svg style="position:absolute;left:921.9px;top:147.79999999999998px;" width="4.8" height="3" viewBox="0 0 4.8 3"><path d="M0 0 H4.8 L2.4 3Z" fill="#1b1b1b"/></svg>
<svg style="position:absolute;left:935.5px;top:140.0px;" width="18" height="18" viewBox="0 0 18 18"><path d="M1.2 0.8 H7.6 L10 3.2 V10.6 H1.2Z" fill="#f7f7f7" stroke="#8f8f8f" stroke-width="1"/><path d="M7.4 5.4 H13.8 L16.4 8 V16.6 H7.4Z" fill="#f7f7f7" stroke="#8f8f8f" stroke-width="1"/><path d="M4.4 6 C8 4.6 10.4 6.6 10.4 9.4 L12.4 9.4 L9.4 13 L6.4 9.4 L8.4 9.4 C8.4 7.6 7 6.4 4.4 6Z" fill="#4f8fd8" stroke="#23599e" stroke-width=".8" stroke-linejoin="round"/></svg>
<svg style="position:absolute;left:960.5px;top:140.0px;" width="18" height="18" viewBox="0 0 18 18"><rect x="0.7" y="1.4" width="15.4" height="11.4" fill="#fbfbfb" stroke="#9d9d9d" stroke-width="1.1"/><path d="M2.4 3.6 H14.4" stroke="#e2e2e2" stroke-width="1"/><rect x="7.8" y="9.8" width="9.4" height="3.2" fill="#d81f1f" stroke="#8f0c0c" stroke-width=".9"/></svg>
<div style="position:absolute;left:986px;top:139.5px;width:1px;height:19px;background:#d4d4d4;"></div>
<svg style="position:absolute;left:991.5px;top:140.0px;" width="18" height="18" viewBox="0 0 18 18"><rect x="1" y="1.4" width="15.6" height="11.6" fill="#fbfbfb" stroke="#9d9d9d" stroke-width="1.1"/><rect x="10.4" y="4" width="4" height="4.4" fill="none" stroke="#d2d2d2" stroke-width=".8"/><path d="M1 5.8 L16.8 16.8 H1Z" fill="#7cc04a" stroke="#3f8a1a" stroke-width="1"/><path d="M3.4 11.6 L7.4 14.6 H3.4Z" fill="#4f9a26"/></svg>
<svg style="position:absolute;left:1017.6px;top:147.79999999999998px;" width="4.8" height="3" viewBox="0 0 4.8 3"><path d="M0 0 H4.8 L2.4 3Z" fill="#1b1b1b"/></svg>
<svg style="position:absolute;left:51.5px;top:170.9px;" width="18" height="18" viewBox="0 0 18 18"><path d="M4.8 2.2 V13.8 L7.6 11.4 L9.6 15.8 L11.4 15 L9.4 10.8 L13.2 10.6Z" fill="#fdfdfd" stroke="#4a4a4a" stroke-width="1" stroke-linejoin="round"/></svg>
<svg style="position:absolute;left:77.0px;top:170.9px;" width="18" height="18" viewBox="0 0 18 18"><circle cx="7.4" cy="7.2" r="6" fill="#eef1f5" stroke="#8f8f8f" stroke-width="1.5"/><path d="M7.4 1.6 L3.4 11.4" stroke="#b9b9b9" stroke-width=".8"/><path d="M2.8 5 H6 M4.4 3.4 V6.6 M8 9.6 H11" stroke="#505a6a" stroke-width="1.1"/><path d="M11.8 11.6 L16.6 16.2" stroke="#6a6a6a" stroke-width="2.6" stroke-linecap="round"/></svg>
<div style="position:absolute;left:101.7px;top:170.4px;width:1px;height:19px;background:#d4d4d4;"></div>
<svg style="position:absolute;left:107.6px;top:170.9px;" width="19" height="18" viewBox="0 0 19 18"><path d="M3 3.4 C6 1.6 9 1.6 12 3 S15.4 3.6 16 3 M3 6.2 C6 4.6 9 4.8 12 6 S15.4 6.4 16 6" fill="none" stroke="#3f6fb5" stroke-width="1.3"/><path d="M3 9 H16" stroke="#7a9fd0" stroke-width="1" stroke-dasharray="1.6 .8"/><rect x="0.6" y="13" width="17.6" height="4" fill="#1f52a0"/></svg>
<svg style="position:absolute;left:134.29999999999998px;top:177.9px;" width="4.8" height="3" viewBox="0 0 4.8 3"><path d="M0 0 H4.8 L2.4 3Z" fill="#1b1b1b"/></svg>
<svg style="position:absolute;left:146.5px;top:170.9px;" width="20" height="18" viewBox="0 0 20 18"><path d="M5.4 4 L11.4 8.4 L7 14.2 L1.6 9.4Z" fill="#f3f3f3" stroke="#3a3a3a" stroke-width="1.2" stroke-linejoin="round"/><path d="M4.8 3 L6.6 1.2 L8.6 2.6" fill="none" stroke="#555" stroke-width="1.1"/><path d="M9.4 6.2 C13 4.6 15.6 7.6 15.4 13.4 L12.8 13.4 C12.8 9.8 12 8.2 10.6 8Z" fill="#3f86c8" stroke="#1f5c9a" stroke-width=".8"/><rect x="0" y="13.8" width="19.6" height="3.6" fill="#6f9fd2"/></svg>
<svg style="position:absolute;left:174.6px;top:177.9px;" width="4.8" height="3" viewBox="0 0 4.8 3"><path d="M0 0 H4.8 L2.4 3Z" fill="#1b1b1b"/></svg>
<div style="position:absolute;left:187.8px;top:170.4px;width:1px;height:19px;background:#d4d4d4;"></div>
<svg style="position:absolute;left:194.0px;top:170.9px;" width="18" height="18" viewBox="0 0 18 18"><path d="M2 16 L16 2" stroke="#1a1a1a" stroke-width="1.3"/></svg>
<svg style="position:absolute;left:219.5px;top:170.9px;" width="18" height="18" viewBox="0 0 18 18"><rect x="0.8" y="3.2" width="16.4" height="10.4" fill="#5a93d6" stroke="#2f64aa" stroke-width="1.2"/><path d="M2 15.6 H16" stroke="#cfd6df" stroke-width="1"/></svg>
<svg style="position:absolute;left:245.3px;top:170.9px;" width="18" height="18" viewBox="0 0 18 18"><ellipse cx="9" cy="8.6" rx="8.2" ry="5.7" fill="#5a93d6" stroke="#2f64aa" stroke-width="1.2"/></svg>
<div style="position:absolute;left:270px;top:170.4px;width:1px;height:19px;background:#d4d4d4;"></div>
<svg style="position:absolute;left:275.8px;top:170.9px;" width="18" height="18" viewBox="0 0 18 18"><path d="M1 8.2 H12" stroke="#111" stroke-width="1.4"/><path d="M11.4 5.4 L16.6 8.2 L11.4 11Z" fill="#111"/></svg>
<svg style="position:absolute;left:302.6px;top:177.9px;" width="4.8" height="3" viewBox="0 0 4.8 3"><path d="M0 0 H4.8 L2.4 3Z" fill="#1b1b1b"/></svg>
<svg style="position:absolute;left:315.2px;top:170.9px;" width="18" height="18" viewBox="0 0 18 18"><path d="M13.4 1.2 L16 3.4 L6 15 L3 15.6 L3.6 12.6Z" fill="#f0a03a" stroke="#b8651a" stroke-width=".8" stroke-linejoin="round"/><path d="M13.4 1.2 L16 3.4 L14.8 4.8 L12.2 2.6Z" fill="#e0566a"/><path d="M3.6 12.6 L6 15 L2 16.4Z" fill="#f4dcae" stroke="#8a6a3a" stroke-width=".5"/><path d="M2 16.4 L2.6 14.8 L3.6 15.8Z" fill="#222"/><path d="M6 15.6 C9 15 11 15.4 12.6 16" stroke="#8a8a8a" stroke-width=".6" fill="none"/></svg>
<svg style="position:absolute;left:341.3px;top:177.9px;" width="4.8" height="3" viewBox="0 0 4.8 3"><path d="M0 0 H4.8 L2.4 3Z" fill="#1b1b1b"/></svg>
<svg style="position:absolute;left:353.7px;top:170.9px;" width="18" height="18" viewBox="0 0 18 18"><path d="M3.4 3.2 H8.4 V14.4 H13.6" fill="none" stroke="#1a1a1a" stroke-width="1.3"/><circle cx="3" cy="3.2" r="2" fill="#fff" stroke="#1a1a1a" stroke-width="1.2"/><circle cx="14.6" cy="14.4" r="2" fill="#fff" stroke="#1a1a1a" stroke-width="1.2"/></svg>
<svg style="position:absolute;left:380.1px;top:177.9px;" width="4.8" height="3" viewBox="0 0 4.8 3"><path d="M0 0 H4.8 L2.4 3Z" fill="#1b1b1b"/></svg>
<div style="position:absolute;left:392.5px;top:170.4px;width:1px;height:19px;background:#d4d4d4;"></div>
<svg style="position:absolute;left:398.7px;top:170.9px;" width="18" height="18" viewBox="0 0 18 18"><path d="M9 0.8 L17.4 9 L9 17.2 L0.6 9Z" fill="#5a93d6" stroke="#2f64aa" stroke-width="1.2" stroke-linejoin="round"/></svg>
<svg style="position:absolute;left:424.6px;top:177.9px;" width="4.8" height="3" viewBox="0 0 4.8 3"><path d="M0 0 H4.8 L2.4 3Z" fill="#1b1b1b"/></svg>
<svg style="position:absolute;left:437.3px;top:170.9px;" width="18" height="18" viewBox="0 0 18 18"><circle cx="9" cy="9" r="8.2" fill="#5a93d6" stroke="#2f64aa" stroke-width="1.2"/><circle cx="6" cy="6.6" r="1.1" fill="#1f4a86"/><circle cx="12" cy="6.6" r="1.1" fill="#1f4a86"/><path d="M4.6 10.8 C6.6 14 11.4 14 13.4 10.8" fill="none" stroke="#1f4a86" stroke-width="1.2"/></svg>
<svg style="position:absolute;left:463.40000000000003px;top:177.9px;" width="4.8" height="3" viewBox="0 0 4.8 3"><path d="M0 0 H4.8 L2.4 3Z" fill="#1b1b1b"/></svg>
<svg style="position:absolute;left:476.2px;top:170.9px;" width="18" height="18" viewBox="0 0 18 18"><path d="M0.6 9 L5.6 4 V7 H12.4 V4 L17.4 9 L12.4 14 V11 H5.6 V14Z" fill="#5a93d6" stroke="#2f64aa" stroke-width="1.2" stroke-linejoin="round"/></svg>
<svg style="position:absolute;left:502.6px;top:177.9px;" width="4.8" height="3" viewBox="0 0 4.8 3"><path d="M0 0 H4.8 L2.4 3Z" fill="#1b1b1b"/></svg>
<svg style="position:absolute;left:515.0px;top:170.9px;" width="18" height="18" viewBox="0 0 18 18"><rect x="0.8" y="0.8" width="16.4" height="16.4" fill="#5a93d6" stroke="#2f64aa" stroke-width="1.2"/><path d="M5.6 0.8 V17.2 M0.8 5.6 H17.2" stroke="#2f64aa" stroke-width="1.2"/><path d="M6.6 6.6 H16.2 V16.2 H6.6Z" fill="#6fa3de"/></svg>
<svg style="position:absolute;left:541.1px;top:177.9px;" width="4.8" height="3" viewBox="0 0 4.8 3"><path d="M0 0 H4.8 L2.4 3Z" fill="#1b1b1b"/></svg>
<svg style="position:absolute;left:553.5px;top:170.9px;" width="18" height="18" viewBox="0 0 18 18"><path d="M2.6 1 H15.4 Q17.2 1 17.2 2.8 V10.2 Q17.2 12 15.4 12 H8.4 L2.4 16.8 L5 12 H2.6 Q0.8 12 0.8 10.2 V2.8 Q0.8 1 2.6 1Z" fill="#5a93d6" stroke="#2f64aa" stroke-width="1.2" stroke-linejoin="round"/></svg>
<svg style="position:absolute;left:579.8000000000001px;top:177.9px;" width="4.8" height="3" viewBox="0 0 4.8 3"><path d="M0 0 H4.8 L2.4 3Z" fill="#1b1b1b"/></svg>
<svg style="position:absolute;left:592.3px;top:170.9px;" width="18" height="18" viewBox="0 0 18 18"><path d="M9 0.8 L11.2 6.6 L17.4 6.8 L12.6 10.6 L14.4 16.8 L9 13.2 L3.6 16.8 L5.4 10.6 L0.6 6.8 L6.8 6.6Z" fill="#5a93d6" stroke="#2f64aa" stroke-width="1.1" stroke-linejoin="round"/></svg>
<svg style="position:absolute;left:618.6px;top:177.9px;" width="4.8" height="3" viewBox="0 0 4.8 3"><path d="M0 0 H4.8 L2.4 3Z" fill="#1b1b1b"/></svg>
<svg style="position:absolute;left:631.0px;top:170.9px;" width="18" height="18" viewBox="0 0 18 18"><path d="M2.4 3.4 L4.4 1.2 H13.6 L15.6 3.4 V16.4 H2.4Z" fill="#4f6f9a" stroke="#10151c" stroke-width="1.4" stroke-linejoin="round"/><path d="M2.4 3.6 H15.6" stroke="#8aa6c9" stroke-width="1"/><path d="M4.4 1.6 H13.6 L15 3.2 H3Z" fill="#9ab4d4"/></svg>
<svg style="position:absolute;left:657.3000000000001px;top:177.9px;" width="4.8" height="3" viewBox="0 0 4.8 3"><path d="M0 0 H4.8 L2.4 3Z" fill="#1b1b1b"/></svg>
<div style="position:absolute;left:669.7px;top:170.4px;width:1px;height:19px;background:#d4d4d4;"></div>
<svg style="position:absolute;left:676.5px;top:170.9px;" width="18" height="18" viewBox="0 0 18 18"><path d="M10.8 6.6 L17.2 8.2 L14.2 13.4 L13.4 11 C12.6 8 9.6 5.6 6.8 6.6 C4.2 7.6 3.8 11.4 6.6 13 C7.6 13.6 9 13.6 9.8 13 L10.4 16 C7.6 17.2 3.6 16 2 13 C0 9 2 4.4 6 3 C9.6 1.8 13 3.4 14.6 6Z" fill="#9a6ab0" stroke="#5c2f78" stroke-width="1" stroke-linejoin="round"/></svg>
<svg style="position:absolute;left:701.5px;top:170.9px;" width="18" height="18" viewBox="0 0 18 18"><rect x="1.4" y="1.4" width="6" height="3.6" fill="#dadada" stroke="#cacaca" stroke-width=".8"/><rect x="1.4" y="7" width="14.6" height="4" fill="#dadada" stroke="#cacaca" stroke-width=".8"/><rect x="1.4" y="13" width="8.4" height="3.6" fill="#dadada" stroke="#cacaca" stroke-width=".8"/><path d="M1 0.6 V17.4" stroke="#cfcfcf" stroke-width="1"/></svg>
<svg style="position:absolute;left:727.8000000000001px;top:177.9px;" width="4.8" height="3" viewBox="0 0 4.8 3"><path d="M0 0 H4.8 L2.4 3Z" fill="#bdbdbd"/></svg>
<svg style="position:absolute;left:741.0px;top:170.9px;" width="18" height="18" viewBox="0 0 18 18"><rect x="5.6" y="1" width="11" height="11" fill="#f3f3f3" stroke="#dcdcdc" stroke-width="1"/><rect x="1.6" y="5.6" width="11" height="11" fill="#f3f3f3" stroke="#dcdcdc" stroke-width="1"/><rect x="3.6" y="3.4" width="11" height="11" fill="#cfcfcf" stroke="#c2c2c2" stroke-width="1"/></svg>
<svg style="position:absolute;left:766.6px;top:177.9px;" width="4.8" height="3" viewBox="0 0 4.8 3"><path d="M0 0 H4.8 L2.4 3Z" fill="#bdbdbd"/></svg>
<svg style="position:absolute;left:780.0px;top:170.9px;" width="18" height="18" viewBox="0 0 18 18"><rect x="1.6" y="8.6" width="5" height="8.4" fill="#dadada" stroke="#cbcbcb" stroke-width=".8"/><rect x="11.4" y="8.6" width="5" height="8.4" fill="#dadada" stroke="#cbcbcb" stroke-width=".8"/><path d="M5.4 3.6 H13 M7.6 1.4 L5 3.6 L7.6 5.8 M11 1.4 L13.4 3.6 L11 5.8" fill="none" stroke="#cfcfcf" stroke-width="1.1"/><circle cx="13" cy="3.6" r="2.2" fill="none" stroke="#d6d6d6" stroke-width=".9"/></svg>
<div style="position:absolute;left:804.7px;top:170.4px;width:1px;height:19px;background:#d4d4d4;"></div>
<svg style="position:absolute;left:811.0px;top:170.9px;" width="18" height="18" viewBox="0 0 18 18"><rect x="3.4" y="5" width="13.2" height="10" rx="1" fill="#1c1c1c"/><rect x="1.6" y="3.2" width="13.2" height="10" rx="1" fill="#f0e68c" stroke="#1c1c1c" stroke-width="1.3"/></svg>
<svg style="position:absolute;left:837.0px;top:170.9px;" width="18" height="18" viewBox="0 0 18 18"><path d="M4.4 1 V13.6 H17 M1 4.4 H13.6 V17" fill="none" stroke="#dcdcdc" stroke-width="1.8"/></svg>
<svg style="position:absolute;left:867.0px;top:170.9px;" width="18" height="18" viewBox="0 0 18 18"><path d="M5.4 9.4 L13.4 17" stroke="#c3c3c3" stroke-width="1.5"/><path d="M4.6 1 V5" stroke="#dadada" stroke-width="1"/></svg>
<svg style="position:absolute;left:888.3000000000001px;top:177.9px;" width="4.8" height="3" viewBox="0 0 4.8 3"><path d="M0 0 H4.8 L2.4 3Z" fill="#bdbdbd"/></svg>
<div style="position:absolute;left:899.8px;top:170.4px;width:1px;height:19px;background:#d4d4d4;"></div>
<svg style="position:absolute;left:907.0px;top:170.9px;" width="18" height="18" viewBox="0 0 18 18"><path d="M3.6 4.4 L11.6 1.6 L16.6 8.4 L13.6 16.6 L2.6 14.6 L6.8 9.4Z" fill="none" stroke="#111" stroke-width="1.3" stroke-linejoin="round"/><rect x="2.5" y="3.3000000000000003" width="2.2" height="2.2" fill="#111"/><rect x="10.5" y="0.5" width="2.2" height="2.2" fill="#111"/><rect x="15.500000000000002" y="7.300000000000001" width="2.2" height="2.2" fill="#111"/><rect x="12.5" y="15.500000000000002" width="2.2" height="2.2" fill="#111"/><rect x="1.5" y="13.5" width="2.2" height="2.2" fill="#111"/></svg>
<svg style="position:absolute;left:933.5px;top:170.9px;" width="18" height="18" viewBox="0 0 18 18"><path d="M11.4 1 L17.4 5.6 L8 16 L2.6 13Z" fill="#f2d24a" stroke="#b8921a" stroke-width="1" stroke-linejoin="round"/><path d="M11.4 1 L17.4 5.6 L16 7.2 L10 2.6Z" fill="#f7e68a"/><path d="M2.6 13 L8 16 L1 17.6Z" fill="#e9e2c6" stroke="#8a8a7a" stroke-width=".7"/></svg>
<svg style="position:absolute;left:959.0px;top:170.9px;" width="18" height="18" viewBox="0 0 18 18"><path d="M6.4 4.4 L8.4 2 H15 L16.8 4.4 V15.8 H6.4Z" fill="#dedede" stroke="#d0d0d0" stroke-width="1"/><path d="M1 10 L4.4 7 V9 H8 V11 H4.4 V13Z" fill="#e4e4e4" stroke="#d4d4d4" stroke-width=".8"/></svg>
<div style="position:absolute;left:885px;top:143px;width:2px;height:12px;background:repeating-linear-gradient(#c2c2c2 0,#c2c2c2 1px,transparent 1px,transparent 3px);"></div>
<div style="position:absolute;left:11.4px;top:794.9px;width:39.2px;height:39.2px;border-radius:50%;border:1px solid #1a3a66;background:radial-gradient(circle at 50% 30%,#9fd3f2 0,#2f7fc0 45%,#12386e 100%);"></div>
<svg style="position:absolute;left:11px;top:794.5px;" width="40" height="40" viewBox="0 0 40 40"><ellipse cx="20" cy="10.5" rx="15" ry="8.5" fill="#fff" opacity=".26"/><ellipse cx="20" cy="33" rx="13" ry="6" fill="#38c6f0" opacity=".55"/><g transform="translate(20 20.5) scale(1.22) translate(-18.6 -20)"><path d="M11 13.4 C14 11.4 16.4 11.4 19 12.6 L17.6 19.4 C15.2 18.2 12.6 18.2 9.6 20Z" fill="#e8542a"/><path d="M20.6 13 C23.2 14 26 14 29.4 12 L28 19 C25 21 22 20.8 19.2 19.8Z" fill="#8cc63e"/><path d="M9.2 21.6 C12.2 19.8 14.8 19.8 17.2 21 L15.8 28 C13.2 26.8 10.6 26.8 7.8 28.6Z" fill="#3f9ad8"/><path d="M18.8 21.6 C21.6 22.6 24.6 22.6 27.6 20.6 L26.2 27.6 C23.2 29.6 20.4 29.4 17.4 28.4Z" fill="#f6c12a"/></g></svg>
<div style="position:absolute;left:66px;top:799.5px;width:3px;height:2.4px;background:#2b3340;box-shadow:0 1px 0 rgba(255,255,255,.55);"></div><div style="position:absolute;left:70px;top:799.5px;width:3px;height:2.4px;background:#2b3340;box-shadow:0 1px 0 rgba(255,255,255,.55);"></div><div style="position:absolute;left:74px;top:799.5px;width:3px;height:2.4px;background:#2b3340;box-shadow:0 1px 0 rgba(255,255,255,.55);"></div><div style="position:absolute;left:66px;top:807.5px;width:3px;height:2.4px;background:#2b3340;box-shadow:0 1px 0 rgba(255,255,255,.55);"></div><div style="position:absolute;left:70px;top:807.5px;width:3px;height:2.4px;background:#2b3340;box-shadow:0 1px 0 rgba(255,255,255,.55);"></div><div style="position:absolute;left:74px;top:807.5px;width:3px;height:2.4px;background:#2b3340;box-shadow:0 1px 0 rgba(255,255,255,.55);"></div><div style="position:absolute;left:66px;top:815px;width:3px;height:2.4px;background:#2b3340;box-shadow:0 1px 0 rgba(255,255,255,.55);"></div><div style="position:absolute;left:70px;top:815px;width:3px;height:2.4px;background:#2b3340;box-shadow:0 1px 0 rgba(255,255,255,.55);"></div><div style="position:absolute;left:74px;top:815px;width:3px;height:2.4px;background:#2b3340;box-shadow:0 1px 0 rgba(255,255,255,.55);"></div><div style="position:absolute;left:66px;top:822.5px;width:3px;height:2.4px;background:#2b3340;box-shadow:0 1px 0 rgba(255,255,255,.55);"></div><div style="position:absolute;left:70px;top:822.5px;width:3px;height:2.4px;background:#2b3340;box-shadow:0 1px 0 rgba(255,255,255,.55);"></div><div style="position:absolute;left:74px;top:822.5px;width:3px;height:2.4px;background:#2b3340;box-shadow:0 1px 0 rgba(255,255,255,.55);"></div><div style="position:absolute;left:66px;top:830.5px;width:3px;height:2.4px;background:#2b3340;box-shadow:0 1px 0 rgba(255,255,255,.55);"></div><div style="position:absolute;left:70px;top:830.5px;width:3px;height:2.4px;background:#2b3340;box-shadow:0 1px 0 rgba(255,255,255,.55);"></div><div style="position:absolute;left:74px;top:830.5px;width:3px;height:2.4px;background:#2b3340;box-shadow:0 1px 0 rgba(255,255,255,.55);"></div>
<div style="position:absolute;left:84.5px;top:794.2px;width:54px;height:42.6px;border:1px solid #66799a;border-radius:2.5px;background:linear-gradient(#d3dfef 0,#c3d2e7 45%,#b4c6df 50%,#bccde4 100%);box-shadow:inset 0 0 0 1px rgba(255,255,255,.55);"></div>
<div style="position:absolute;left:147.5px;top:794.2px;width:54.5px;height:42.6px;border:1px solid #66799a;border-radius:2.5px;background:linear-gradient(#d3dfef 0,#c3d2e7 45%,#b4c6df 50%,#bccde4 100%);box-shadow:inset 0 0 0 1px rgba(255,255,255,.55);"></div>
<div style="position:absolute;left:144.4px;top:795px;width:54px;height:41.5px;"></div>
<div style="position:absolute;left:144.4px;top:794.2px;width:54px;height:42.6px;border:1px solid #66799a;border-radius:2.5px;background:linear-gradient(#d3dfef 0,#c3d2e7 45%,#b4c6df 50%,#bccde4 100%);box-shadow:inset 0 0 0 1px rgba(255,255,255,.55);"></div>
<div style="position:absolute;left:198.4px;top:794.2px;width:3.8px;height:42.6px;border:1px solid #6f819c;border-left:none;border-radius:0 2.5px 2.5px 0;background:#bccde4;"></div>
<div style="position:absolute;left:205px;top:794.2px;width:58px;height:42.6px;border:1px solid #66799a;border-radius:2.5px;background:linear-gradient(#d3dfef 0,#c3d2e7 45%,#b4c6df 50%,#bccde4 100%);box-shadow:inset 0 0 0 1px rgba(255,255,255,.55);"></div>
<div style="position:absolute;left:265.5px;top:794.2px;width:58px;height:42.6px;border:1px solid #66799a;border-radius:2.5px;background:linear-gradient(#d3dfef 0,#c3d2e7 45%,#b4c6df 50%,#bccde4 100%);box-shadow:inset 0 0 0 1px rgba(255,255,255,.55);"></div>
<svg style="position:absolute;left:92.5px;top:797px;" width="38" height="37.5" viewBox="0 0 38 35" preserveAspectRatio="none"><path d="M1.5 5 H9 L11 2.5 H19 V6 H36 V30 H1.5Z" fill="#f3d778" stroke="#c9a23a" stroke-width="1"/><rect x="12" y="8" width="22" height="10" fill="#fbf3d0" stroke="#d9bf6a" stroke-width=".7"/><rect x="5" y="3.6" width="3" height="2.2" fill="#3fa34a"/><rect x="15.6" y="3.6" width="3" height="2.2" fill="#e0443a"/><rect x="24" y="8.6" width="3" height="2.2" fill="#3f7fd0"/><path d="M1.5 12 H36 V31 H1.5Z" fill="#f6df8c" stroke="#c9a23a" stroke-width="1"/><path d="M6 33.5 L9 20.5 H29 L32 33.5Z" fill="#7ec3ea" stroke="#3f8fc4" stroke-width="1"/><path d="M11.6 33.5 L13 26.5 H25 L26.4 33.5Z" fill="#f6df8c"/><path d="M8.2 23 H29.8" stroke="#b8e0f6" stroke-width="1.6"/></svg>
<svg style="position:absolute;left:153px;top:797px;" width="38" height="38" viewBox="0 0 38 38"><ellipse cx="19" cy="33" rx="9" ry="3.6" fill="#c9d3df" stroke="#8a97a8" stroke-width=".8"/><path d="M19 2.5 L33.5 9 V24 L19 32 L4.5 24 V9Z" fill="#e9eef5" stroke="#c4ccd8" stroke-width="1"/><path d="M19 5.5 L29.5 10 L19 14.8 L8.5 10Z" fill="#1b2c52"/><path d="M7 12.6 L17.4 17.4 V28.4 L7 22.6Z" fill="#1f3566"/><path d="M31 12.6 L20.6 17.4 V28.4 L31 22.6Z" fill="#253d73"/></svg>
<svg style="position:absolute;left:218px;top:799px;" width="33" height="33" viewBox="0 0 33 33"><rect x="1" y="1" width="31" height="31" fill="#f6f8fc" stroke="#3b5fb0" stroke-width="2"/><rect x="4" y="4" width="25" height="25" fill="none" stroke="#9db3e0" stroke-width="1"/><path d="M17 22 H29 M17 25.4 H29 M21 7.4 H29" stroke="#c3cfe6" stroke-width="1.2"/><text x="3.4" y="24.4" font-size="24" font-weight="700" font-style="italic" font-family="Liberation Sans,sans-serif" fill="#2a4a9c" textLength="26" lengthAdjust="spacingAndGlyphs">W</text></svg>
<svg style="position:absolute;left:276px;top:797px;" width="40" height="38" viewBox="0 0 40 38"><path d="M3 24 C1 14 12 6 23 8.6 C31 10.6 34 18 30 24.6 C27 29.6 22 27 19.6 29.6 C17 32.6 11 33 7.6 30 C5 28 6.6 25 3 24Z" fill="#dfe9f3" stroke="#9db3c9" stroke-width="1"/><circle cx="10" cy="19.4" r="2.7" fill="#e0463c"/><circle cx="15" cy="13.6" r="2.7" fill="#57b947"/><circle cx="22.4" cy="12" r="2.7" fill="#f2c53a"/><circle cx="19" cy="22" r="2.2" fill="#8fb9d6"/><path d="M33.6 4 L36 5.4 L24.6 30.6 L22.8 32.6 L22.8 29.8Z" fill="#d9924a" stroke="#9a5c22" stroke-width=".8"/><path d="M32 1.6 C33.6 0 36.6 0.6 37.8 2.6 C37.6 5 36.6 6.4 35.6 7.6 L32.6 6 C32.6 4.4 32.4 3 32 1.6Z" fill="#c98a5a" stroke="#8a5a32" stroke-width=".7"/></svg>
<div style="position:absolute;left:1272.5px;top:799.5px;width:3px;height:2.4px;background:#2b3340;box-shadow:0 1px 0 rgba(255,255,255,.55);"></div><div style="position:absolute;left:1276.5px;top:799.5px;width:3px;height:2.4px;background:#2b3340;box-shadow:0 1px 0 rgba(255,255,255,.55);"></div><div style="position:absolute;left:1280.5px;top:799.5px;width:3px;height:2.4px;background:#2b3340;box-shadow:0 1px 0 rgba(255,255,255,.55);"></div><div style="position:absolute;left:1272.5px;top:807.5px;width:3px;height:2.4px;background:#2b3340;box-shadow:0 1px 0 rgba(255,255,255,.55);"></div><div style="position:absolute;left:1276.5px;top:807.5px;width:3px;height:2.4px;background:#2b3340;box-shadow:0 1px 0 rgba(255,255,255,.55);"></div><div style="position:absolute;left:1280.5px;top:807.5px;width:3px;height:2.4px;background:#2b3340;box-shadow:0 1px 0 rgba(255,255,255,.55);"></div><div style="position:absolute;left:1272.5px;top:815px;width:3px;height:2.4px;background:#2b3340;box-shadow:0 1px 0 rgba(255,255,255,.55);"></div><div style="position:absolute;left:1276.5px;top:815px;width:3px;height:2.4px;background:#2b3340;box-shadow:0 1px 0 rgba(255,255,255,.55);"></div><div style="position:absolute;left:1280.5px;top:815px;width:3px;height:2.4px;background:#2b3340;box-shadow:0 1px 0 rgba(255,255,255,.55);"></div><div style="position:absolute;left:1272.5px;top:822.5px;width:3px;height:2.4px;background:#2b3340;box-shadow:0 1px 0 rgba(255,255,255,.55);"></div><div style="position:absolute;left:1276.5px;top:822.5px;width:3px;height:2.4px;background:#2b3340;box-shadow:0 1px 0 rgba(255,255,255,.55);"></div><div style="position:absolute;left:1280.5px;top:822.5px;width:3px;height:2.4px;background:#2b3340;box-shadow:0 1px 0 rgba(255,255,255,.55);"></div><div style="position:absolute;left:1272.5px;top:830.5px;width:3px;height:2.4px;background:#2b3340;box-shadow:0 1px 0 rgba(255,255,255,.55);"></div><div style="position:absolute;left:1276.5px;top:830.5px;width:3px;height:2.4px;background:#2b3340;box-shadow:0 1px 0 rgba(255,255,255,.55);"></div><div style="position:absolute;left:1280.5px;top:830.5px;width:3px;height:2.4px;background:#2b3340;box-shadow:0 1px 0 rgba(255,255,255,.55);"></div>
<span class="t" style="left:1292.00px;top:806.78px;font-size:13.5px;line-height:15.08px;color:#fff;transform:scaleX(0.8798);">EN</span>
<svg style="position:absolute;left:1330.5px;top:813px;" width="10" height="7" viewBox="0 0 10 7"><path d="M5 0.8 L9.4 6 H0.6Z" fill="#fff"/></svg>
<svg style="position:absolute;left:1360px;top:807px;" width="16" height="18" viewBox="0 0 16 18"><path d="M1 6 H3.6 L8 1.6 V16.4 L3.6 12 H1Z" fill="#f3f5f8" stroke="#4a5668" stroke-width=".9"/><path d="M11 5.6 C12.8 7.8 12.8 10.4 11 12.6" fill="none" stroke="#dfe6ee" stroke-width="1.1"/></svg>
<span class="t" style="left:1414.20px;top:799.78px;font-size:13.5px;line-height:15.08px;color:#fff;transform:scaleX(0.9827);">14:56</span>
<span class="t" style="left:1397.00px;top:819.78px;font-size:13.5px;line-height:15.08px;color:#fff;transform:scaleX(0.9990);">14.07.2018</span>
<div style="position:absolute;left:1476.5px;top:794.5px;width:11.5px;height:42.5px;background:linear-gradient(90deg,#59687e,#4c5a70 40%,#6a7b94);border-left:1px solid #3f4b5e;box-shadow:inset 1px 0 0 rgba(255,255,255,.25);"></div>
<svg style="position:absolute;left:1196.5px;top:772.2px;" width="18" height="18" viewBox="0 0 16 16"><rect x="1" y="0.6" width="14" height="14.8" rx="1.6" fill="#4a9fe8" stroke="#1f6cc4" stroke-width="1"/><circle cx="8" cy="7" r="4.6" fill="#b3d9f8" stroke="#e9f4fd" stroke-width=".9"/><circle cx="8" cy="7" r="1.4" fill="#1f6cc4"/><path d="M4 14 L8 8" stroke="#e9f4fd" stroke-width="1.2"/></svg>
<svg style="position:absolute;left:1218px;top:772.2px;" width="18" height="18" viewBox="0 0 16 16"><circle cx="8" cy="8" r="7.3" fill="#b3d9f8" stroke="#1f6cc4" stroke-width="1"/><circle cx="8" cy="8" r="4.2" fill="#d6eafa" stroke="#6fa9e0" stroke-width=".8"/><circle cx="8" cy="8" r="1.6" fill="#fff" stroke="#1f6cc4" stroke-width=".8"/></svg>
<svg style="position:absolute;left:1240px;top:772.2px;" width="18" height="18" viewBox="0 0 16 16"><path d="M0.6 1.4 L8.4 5.4 L0.6 9.8Z" fill="#4a9fe8" stroke="#1f6cc4" stroke-width=".8"/><rect x="7.4" y="4.4" width="7.6" height="7.6" fill="#b9c0c8" stroke="#8a929c" stroke-width=".8"/><path d="M9 6 V10 M11 6 V10 M13 6 V10" stroke="#f2f2f2" stroke-width=".8"/><path d="M11 12 V14.6 M8.4 15 H13.6" stroke="#9aa2ac" stroke-width="1.2"/></svg>
<svg style="position:absolute;left:1261.8px;top:772.2px;" width="18" height="18" viewBox="0 0 16 16"><rect x="4.6" y="0.8" width="10.6" height="7.4" fill="#4a9fe8" stroke="#1f6cc4" stroke-width="1"/><rect x="0.8" y="5.6" width="10.6" height="7.4" fill="#5aaaf0" stroke="#1f6cc4" stroke-width="1"/><path d="M6 13 V14.6 M2.6 15.2 H9.6" stroke="#1f6cc4" stroke-width="1.2"/></svg>
<svg style="position:absolute;left:1283.3px;top:772.2px;" width="18" height="18" viewBox="0 0 16 16"><path d="M1.4 14.8 L3 10 L10.6 2.6 L13.6 5.6 L6.2 13Z" fill="#6db6f2" stroke="#1f6cc4" stroke-width="1" stroke-linejoin="round"/><path d="M11.4 1.8 L13 0.4 L15.8 3.2 L14.4 4.8Z" fill="#e9f1fa" stroke="#1f6cc4" stroke-width=".8"/></svg>
<svg style="position:absolute;left:1305px;top:772.2px;" width="18" height="18" viewBox="0 0 16 16"><path d="M0.8 3 H6 L7.4 4.6 H15.2 V14.4 H0.8Z" fill="#6db6f2" stroke="#1f6cc4" stroke-width="1"/><path d="M1.6 6.4 H14.4" stroke="#cfe6fa" stroke-width="1"/></svg>
<svg style="position:absolute;left:1326.8px;top:772.2px;" width="18" height="18" viewBox="0 0 16 16"><rect x="0.8" y="1.8" width="14.4" height="11.6" fill="#58a8ee" stroke="#1f6cc4" stroke-width="1"/><path d="M1.6 12.6 L14.4 2.6 V12.6Z" fill="#2f7fd6"/><path d="M0.8 15 H15.2" stroke="#1f6cc4" stroke-width="1"/></svg>
<svg style="position:absolute;left:1348px;top:772.2px;" width="18" height="18" viewBox="0 0 16 16"><rect x="5" y="0.8" width="10.2" height="8" fill="#5aaaf0" stroke="#1f6cc4" stroke-width="1"/><rect x="0.8" y="5" width="10.2" height="8.6" fill="#e3effb" stroke="#1f6cc4" stroke-width="1"/><rect x="0.8" y="5" width="10.2" height="2" fill="#4a9fe8"/></svg>
<svg style="position:absolute;left:1369.3px;top:772.2px;" width="18" height="18" viewBox="0 0 16 16"><rect x="1.6" y="1.6" width="12.8" height="12.8" rx="1.4" fill="#7f7fe0" stroke="#2a2a9a" stroke-width="1"/><path d="M0 4 H1.6 M0 6.6 H1.6 M0 9.2 H1.6 M0 11.8 H1.6 M14.4 4 H16 M14.4 6.6 H16 M14.4 9.2 H16 M14.4 11.8 H16 M4 0 V1.6 M6.6 0 V1.6 M9.2 0 V1.6 M11.8 0 V1.6 M4 14.4 V16 M6.6 14.4 V16 M9.2 14.4 V16 M11.8 14.4 V16" stroke="#2a2a9a" stroke-width="1"/><rect x="4" y="3.6" width="8" height="8.8" fill="#e6e9fb"/><path d="M6 5 V9 A2 2 0 0 0 10 9 V5" fill="none" stroke="#2a2a9a" stroke-width="1.3"/></svg>
<svg style="position:absolute;left:1391.8px;top:772.2px;" width="18" height="18" viewBox="0 0 16 16"><circle cx="7" cy="7.6" r="6.2" fill="#6db6f2" stroke="#1f6cc4" stroke-width="1"/><path d="M3 4 C6 3 9 5 8 8 C7 10 4 10 3 12" fill="none" stroke="#e9f4fd" stroke-width="1.3"/><path d="M7.6 6.6 L11.4 10.4 L7.6 14.4 H11 L15 10.4 L11 6.6Z" fill="#6cc02c" stroke="#2f7f0c" stroke-width=".8" stroke-linejoin="round"/></svg>
<svg style="position:absolute;left:1412.8px;top:772.2px;" width="18" height="18" viewBox="0 0 16 16"><rect x="0.8" y="0.8" width="14.4" height="14.4" rx="1.4" fill="#f2f5f9" stroke="#2f62a8" stroke-width="1.2"/><path d="M6.2 3 H9.8 V7.4 H12.4 L8 12.4 L3.6 7.4 H6.2Z" fill="#15181e"/></svg>
</div>
</body></html>
